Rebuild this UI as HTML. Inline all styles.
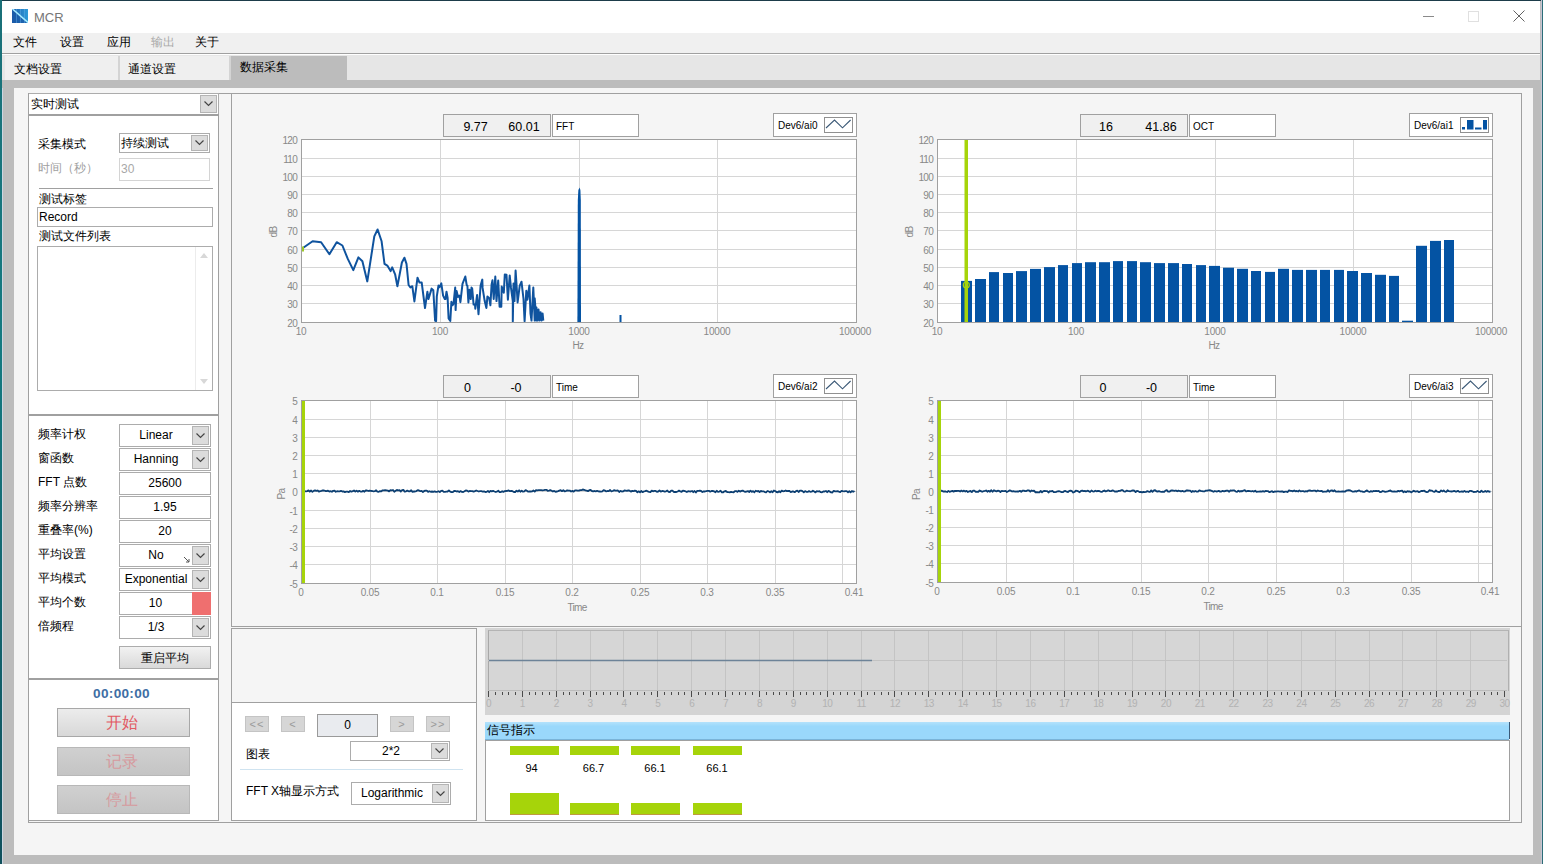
<!DOCTYPE html><html><head><meta charset="utf-8"><style>
html,body{margin:0;padding:0;}
body{width:1543px;height:864px;position:relative;overflow:hidden;background:#f5f5f5;font-family:"Liberation Sans",sans-serif;color:#000;}
div{box-sizing:content-box;}
</style></head><body>
<div style="position:absolute;left:0px;top:0px;width:1543px;height:864px;background:#bcbcbc;"></div>
<div style="position:absolute;left:0px;top:0px;width:1543px;height:1px;background:#1d3c4a;"></div>
<div style="position:absolute;left:0px;top:0px;width:2px;height:864px;background:linear-gradient(#1a7078,#157a80 40%,#10505c);"></div>
<div style="position:absolute;left:2px;top:33px;width:1px;height:831px;background:#ccd6e2;"></div>
<div style="position:absolute;left:1541px;top:0px;width:1px;height:864px;background:#c8c4d4;"></div>
<div style="position:absolute;left:1542px;top:0px;width:1px;height:864px;background:#2c6e78;"></div>
<div style="position:absolute;left:2px;top:1px;width:1538px;height:32px;background:#ffffff;"></div>
<svg style="position:absolute;left:12px;top:9px" width="16" height="14" viewBox="0 0 16 14">
<defs><linearGradient id="ig" x1="0" x2="1" y1="0" y2="0"><stop offset="0" stop-color="#1f5fae"/><stop offset="1" stop-color="#2c9ad8"/></linearGradient></defs>
<rect x="0" y="0" width="16" height="14" fill="url(#ig)"/>
<path d="M0 0 L16 14 L0 14 Z" fill="#1a58a6" opacity="0.75"/>
<rect x="4" y="0" width="0.8" height="14" fill="#6fb8ee" opacity="0.5"/><rect x="8" y="0" width="0.8" height="14" fill="#6fb8ee" opacity="0.5"/><rect x="12" y="0" width="0.8" height="14" fill="#6fb8ee" opacity="0.5"/>
<path d="M0.5 0 L16 13.6" stroke="#a6ecff" stroke-width="1.5"/></svg>
<div style="position:absolute;left:34px;top:9.5px;white-space:nowrap;font-size:13px;color:#767676;letter-spacing:0px;height:15px;line-height:15px;">MCR</div>
<div style="position:absolute;left:1423px;top:16px;width:11px;height:1px;background:#8a8a8a;"></div>
<div style="position:absolute;left:1468px;top:11px;width:9px;height:9px;border:1px solid #e0e0e0;"></div>
<svg style="position:absolute;left:1513px;top:10px" width="12" height="12" viewBox="0 0 12 12"><path d="M0.5 0.5 L11.5 11.5 M11.5 0.5 L0.5 11.5" stroke="#505050" stroke-width="0.9"/></svg>
<div style="position:absolute;left:2px;top:33px;width:1538px;height:20px;background:#f0f0f0;"></div>
<div style="position:absolute;left:2px;top:53px;width:1538px;height:1px;background:#a0a0a0;"></div>
<div style="position:absolute;left:2px;top:54px;width:1538px;height:1px;background:#ffffff;"></div>
<div style="position:absolute;left:13px;top:33px;white-space:nowrap;font-size:12px;color:#000;height:18px;line-height:18px;">文件</div>
<div style="position:absolute;left:60px;top:33px;white-space:nowrap;font-size:12px;color:#000;height:18px;line-height:18px;">设置</div>
<div style="position:absolute;left:107px;top:33px;white-space:nowrap;font-size:12px;color:#000;height:18px;line-height:18px;">应用</div>
<div style="position:absolute;left:151px;top:33px;white-space:nowrap;font-size:12px;color:#a8a8a8;height:18px;line-height:18px;">输出</div>
<div style="position:absolute;left:195px;top:33px;white-space:nowrap;font-size:12px;color:#000;height:18px;line-height:18px;">关于</div>
<div style="position:absolute;left:2px;top:55px;width:1538px;height:25px;background:#e6e6e6;"></div>
<div style="position:absolute;left:5px;top:56px;width:113px;height:24px;background:#efefef;border-right:2px solid #d4d4d4;"></div>
<div style="position:absolute;left:120px;top:56px;width:109px;height:24px;background:#efefef;border-right:2px solid #d4d4d4;"></div>
<div style="position:absolute;left:231px;top:56px;width:116px;height:24px;background:#bcbcbc;"></div>
<div style="position:absolute;left:14px;top:57px;white-space:nowrap;font-size:12px;height:25px;line-height:25px;">文档设置</div>
<div style="position:absolute;left:128px;top:57px;white-space:nowrap;font-size:12px;height:25px;line-height:25px;">通道设置</div>
<div style="position:absolute;left:240px;top:55px;white-space:nowrap;font-size:12px;height:24px;line-height:24px;">数据采集</div>
<div style="position:absolute;left:2px;top:80px;width:1538px;height:8px;background:#bcbcbc;"></div>
<div style="position:absolute;left:14px;top:88px;width:1519px;height:767px;background:#f5f5f5;"></div>
<div style="position:absolute;left:28px;top:93px;width:189px;height:726px;background:#fff;border:1px solid #a0a0a0;"></div>
<div style="position:absolute;left:28px;top:93px;width:189px;height:20px;border:1px solid #acacac;background:#fff;"></div>
<div style="position:absolute;left:31px;top:93px;white-space:nowrap;font-size:12px;color:#000;height:22px;line-height:22px;">实时测试</div>
<div style="position:absolute;left:200px;top:95px;width:15px;height:16px;border:1px solid #b4b4b4;background:#dcdcdc;"><svg width="10" height="6" style="position:absolute;left:3px;top:5px" viewBox="0 0 10 6"><path d="M0.5 0.5 L4.5 4.5 L8.5 0.5" fill="none" stroke="#444" stroke-width="1.15"/></svg></div>
<div style="position:absolute;left:28px;top:114px;width:191px;height:2px;background:#a0a0a0;"></div>
<div style="position:absolute;left:28px;top:414px;width:191px;height:2px;background:#a0a0a0;"></div>
<div style="position:absolute;left:28px;top:678px;width:191px;height:2px;background:#a0a0a0;"></div>
<div style="position:absolute;left:28px;top:93px;width:1px;height:730px;background:#a0a0a0;"></div>
<div style="position:absolute;left:28px;top:822px;width:1494px;height:1px;background:#a0a0a0;"></div>
<div style="position:absolute;left:38px;top:134px;white-space:nowrap;font-size:12px;height:20px;line-height:20px;">采集模式</div>
<div style="position:absolute;left:119px;top:133px;width:89px;height:18px;border:1px solid #acacac;background:#fff;"></div>
<div style="position:absolute;left:121px;top:133px;white-space:nowrap;font-size:12px;color:#000;height:20px;line-height:20px;">持续测试</div>
<div style="position:absolute;left:191px;top:135px;width:15px;height:14px;border:1px solid #b4b4b4;background:#dcdcdc;"><svg width="10" height="6" style="position:absolute;left:3px;top:4px" viewBox="0 0 10 6"><path d="M0.5 0.5 L4.5 4.5 L8.5 0.5" fill="none" stroke="#444" stroke-width="1.15"/></svg></div>
<div style="position:absolute;left:38px;top:158px;white-space:nowrap;font-size:12px;color:#a0a0a0;height:20px;line-height:20px;">时间（秒）</div>
<div style="position:absolute;left:119px;top:158px;width:89px;height:21px;border:1px solid #d4d4d4;background:#fff;"></div>
<div style="position:absolute;left:121px;top:158px;white-space:nowrap;font-size:12px;color:#a8a8a8;height:23px;line-height:23px;">30</div>
<div style="position:absolute;left:39px;top:188px;width:174px;height:1px;background:#a0a0a0;"></div>
<div style="position:absolute;left:39px;top:190px;white-space:nowrap;font-size:12px;height:18px;line-height:18px;">测试标签</div>
<div style="position:absolute;left:37px;top:207px;width:174px;height:18px;border:1px solid #acacac;background:#fff;"></div>
<div style="position:absolute;left:41px;top:207px;white-space:nowrap;font-size:12px;color:#000;height:20px;line-height:20px;"></div>
<div style="position:absolute;left:39px;top:207px;white-space:nowrap;font-size:12px;height:20px;line-height:20px;">Record</div>
<div style="position:absolute;left:39px;top:227px;white-space:nowrap;font-size:12px;height:18px;line-height:18px;">测试文件列表</div>
<div style="position:absolute;left:37px;top:246px;width:174px;height:143px;background:#fff;border:1px solid #acacac;"></div>
<div style="position:absolute;left:195px;top:247px;width:1px;height:143px;background:#ececec;"></div>
<svg style="position:absolute;left:196px;top:250px" width="16" height="10"><path d="M4 8 L8 3 L12 8 Z" fill="#d8d8d8"/></svg>
<svg style="position:absolute;left:196px;top:377px" width="16" height="10"><path d="M4 2 L8 7 L12 2 Z" fill="#d8d8d8"/></svg>
<div style="position:absolute;left:38px;top:423px;white-space:nowrap;font-size:12px;height:22px;line-height:22px;">频率计权</div>
<div style="position:absolute;left:38px;top:447px;white-space:nowrap;font-size:12px;height:22px;line-height:22px;">窗函数</div>
<div style="position:absolute;left:38px;top:471px;white-space:nowrap;font-size:12px;height:22px;line-height:22px;">FFT 点数</div>
<div style="position:absolute;left:38px;top:495px;white-space:nowrap;font-size:12px;height:22px;line-height:22px;">频率分辨率</div>
<div style="position:absolute;left:38px;top:519px;white-space:nowrap;font-size:12px;height:22px;line-height:22px;">重叠率(%)</div>
<div style="position:absolute;left:38px;top:543px;white-space:nowrap;font-size:12px;height:22px;line-height:22px;">平均设置</div>
<div style="position:absolute;left:38px;top:567px;white-space:nowrap;font-size:12px;height:22px;line-height:22px;">平均模式</div>
<div style="position:absolute;left:38px;top:591px;white-space:nowrap;font-size:12px;height:22px;line-height:22px;">平均个数</div>
<div style="position:absolute;left:38px;top:615px;white-space:nowrap;font-size:12px;height:22px;line-height:22px;">倍频程</div>
<div style="position:absolute;left:119px;top:424px;width:90px;height:21px;border:1px solid #acacac;background:#fff;"></div>
<div style="position:absolute;left:120px;top:424px;white-space:nowrap;font-size:12px;color:#000;width:72px;height:23px;line-height:23px;text-align:center;">Linear</div>
<div style="position:absolute;left:192px;top:426px;width:15px;height:17px;border:1px solid #b4b4b4;background:#dcdcdc;"><svg width="10" height="6" style="position:absolute;left:3px;top:6px" viewBox="0 0 10 6"><path d="M0.5 0.5 L4.5 4.5 L8.5 0.5" fill="none" stroke="#444" stroke-width="1.15"/></svg></div>
<div style="position:absolute;left:119px;top:448px;width:90px;height:21px;border:1px solid #acacac;background:#fff;"></div>
<div style="position:absolute;left:120px;top:448px;white-space:nowrap;font-size:12px;color:#000;width:72px;height:23px;line-height:23px;text-align:center;">Hanning</div>
<div style="position:absolute;left:192px;top:450px;width:15px;height:17px;border:1px solid #b4b4b4;background:#dcdcdc;"><svg width="10" height="6" style="position:absolute;left:3px;top:6px" viewBox="0 0 10 6"><path d="M0.5 0.5 L4.5 4.5 L8.5 0.5" fill="none" stroke="#444" stroke-width="1.15"/></svg></div>
<div style="position:absolute;left:119px;top:472px;width:90px;height:21px;border:1px solid #acacac;background:#fff;"></div>
<div style="position:absolute;left:119px;top:472px;white-space:nowrap;font-size:12px;color:#000;width:92px;height:23px;line-height:23px;text-align:center;">25600</div>
<div style="position:absolute;left:119px;top:496px;width:90px;height:21px;border:1px solid #acacac;background:#fff;"></div>
<div style="position:absolute;left:119px;top:496px;white-space:nowrap;font-size:12px;color:#000;width:92px;height:23px;line-height:23px;text-align:center;">1.95</div>
<div style="position:absolute;left:119px;top:520px;width:90px;height:21px;border:1px solid #acacac;background:#fff;"></div>
<div style="position:absolute;left:119px;top:520px;white-space:nowrap;font-size:12px;color:#000;width:92px;height:23px;line-height:23px;text-align:center;">20</div>
<div style="position:absolute;left:119px;top:544px;width:90px;height:21px;border:1px solid #acacac;background:#fff;"></div>
<div style="position:absolute;left:120px;top:544px;white-space:nowrap;font-size:12px;color:#000;width:72px;height:23px;line-height:23px;text-align:center;">No</div>
<div style="position:absolute;left:192px;top:546px;width:15px;height:17px;border:1px solid #b4b4b4;background:#dcdcdc;"><svg width="10" height="6" style="position:absolute;left:3px;top:6px" viewBox="0 0 10 6"><path d="M0.5 0.5 L4.5 4.5 L8.5 0.5" fill="none" stroke="#444" stroke-width="1.15"/></svg></div>
<svg style="position:absolute;left:183px;top:556px" width="8" height="8"><path d="M1 1 L6 6 M6 3 L6 6 L3 6" stroke="#555" stroke-width="1" fill="none"/></svg>
<div style="position:absolute;left:119px;top:568px;width:90px;height:21px;border:1px solid #acacac;background:#fff;"></div>
<div style="position:absolute;left:120px;top:568px;white-space:nowrap;font-size:12px;color:#000;width:72px;height:23px;line-height:23px;text-align:center;">Exponential</div>
<div style="position:absolute;left:192px;top:570px;width:15px;height:17px;border:1px solid #b4b4b4;background:#dcdcdc;"><svg width="10" height="6" style="position:absolute;left:3px;top:6px" viewBox="0 0 10 6"><path d="M0.5 0.5 L4.5 4.5 L8.5 0.5" fill="none" stroke="#444" stroke-width="1.15"/></svg></div>
<div style="position:absolute;left:119px;top:592px;width:90px;height:21px;border:1px solid #acacac;background:#fff;"></div>
<div style="position:absolute;left:119px;top:592px;white-space:nowrap;font-size:12px;color:#000;width:92px;height:23px;line-height:23px;text-align:center;"></div>
<div style="position:absolute;left:119px;top:592px;white-space:nowrap;font-size:12px;width:73px;height:23px;line-height:23px;text-align:center;">10</div>
<div style="position:absolute;left:192px;top:592px;width:19px;height:23px;background:#ef6f6f;"></div>
<div style="position:absolute;left:119px;top:592px;white-space:nowrap;"></div>
<div style="position:absolute;left:119px;top:616px;width:90px;height:21px;border:1px solid #acacac;background:#fff;"></div>
<div style="position:absolute;left:120px;top:616px;white-space:nowrap;font-size:12px;color:#000;width:72px;height:23px;line-height:23px;text-align:center;">1/3</div>
<div style="position:absolute;left:192px;top:618px;width:15px;height:17px;border:1px solid #b4b4b4;background:#dcdcdc;"><svg width="10" height="6" style="position:absolute;left:3px;top:6px" viewBox="0 0 10 6"><path d="M0.5 0.5 L4.5 4.5 L8.5 0.5" fill="none" stroke="#444" stroke-width="1.15"/></svg></div>
<div style="position:absolute;left:119px;top:646px;width:90px;height:21px;border:1px solid #acacac;background:linear-gradient(#f2f2f2,#d9d9d9);font-size:12px;line-height:23px;text-align:center;">重启平均</div>
<div style="position:absolute;left:28px;top:685px;white-space:nowrap;font-size:13.6px;font-weight:bold;color:#3e6ea4;letter-spacing:0.3px;width:187px;height:18px;line-height:18px;text-align:center;">00:00:00</div>
<div style="position:absolute;left:57px;top:708px;width:131px;height:27px;border:1px solid #a8a8a8;background:linear-gradient(#ececec,#d8d8d8);font-size:16px;line-height:28px;text-align:center;color:#e25a64;text-indent:-4px;">开始</div>
<div style="position:absolute;left:57px;top:747px;width:131px;height:27px;border:1px solid #b8b8b8;background:linear-gradient(#d0d0d0,#c4c4c4);font-size:16px;line-height:28px;text-align:center;color:#d69a9e;text-indent:-4px;">记录</div>
<div style="position:absolute;left:57px;top:785px;width:131px;height:27px;border:1px solid #b8b8b8;background:linear-gradient(#d0d0d0,#c4c4c4);font-size:16px;line-height:28px;text-align:center;color:#d69a9e;text-indent:-4px;">停止</div>
<div style="position:absolute;left:219px;top:93px;width:1302px;height:1px;background:#a0a0a0;"></div>
<div style="position:absolute;left:231px;top:93px;width:1289px;height:532px;border:1px solid #a0a0a0;background:#f5f5f5;"></div>
<div style="position:absolute;left:1521px;top:93px;width:1px;height:730px;background:#a0a0a0;"></div>
<svg style="position:absolute;left:0;top:0" width="1543" height="864" viewBox="0 0 1543 864"><rect x="301.5" y="139.5" width="555" height="183" fill="#fff"/><line x1="440.5" y1="139" x2="440.5" y2="322" stroke="#d6d6d6" stroke-width="1"/><line x1="579.5" y1="139" x2="579.5" y2="322" stroke="#d6d6d6" stroke-width="1"/><line x1="717.5" y1="139" x2="717.5" y2="322" stroke="#d6d6d6" stroke-width="1"/><line x1="301" y1="158.5" x2="856" y2="158.5" stroke="#d6d6d6" stroke-width="1"/><line x1="301" y1="176.5" x2="856" y2="176.5" stroke="#d6d6d6" stroke-width="1"/><line x1="301" y1="194.5" x2="856" y2="194.5" stroke="#d6d6d6" stroke-width="1"/><line x1="301" y1="212.5" x2="856" y2="212.5" stroke="#d6d6d6" stroke-width="1"/><line x1="301" y1="230.5" x2="856" y2="230.5" stroke="#d6d6d6" stroke-width="1"/><line x1="301" y1="249.5" x2="856" y2="249.5" stroke="#d6d6d6" stroke-width="1"/><line x1="301" y1="267.5" x2="856" y2="267.5" stroke="#d6d6d6" stroke-width="1"/><line x1="301" y1="285.5" x2="856" y2="285.5" stroke="#d6d6d6" stroke-width="1"/><line x1="301" y1="303.5" x2="856" y2="303.5" stroke="#d6d6d6" stroke-width="1"/><polyline fill="none" stroke="#0f539e" stroke-width="2" stroke-linejoin="round" points="301.5,249.0 312.6,241.3 321.1,242.2 329.4,254.3 336.7,242.2 342.4,245.5 347.8,258.9 353.3,270.1 358.4,257.4 362.4,261.3 367.3,281.4 374.3,236.4 377.6,229.5 381.6,241.3 384.5,263.8 387.3,265.6 390.6,271.1 392.2,267.4 395.2,274.7 397.4,286.2 401.9,262.5 404.4,257.7 406.5,263.8 408.6,285.0 410.4,287.5 412.3,286.2 414.4,301.4 417.5,277.7 419.5,282.6 421.7,282.6 425.0,308.0 427.4,291.7 428.5,299.0 431.6,288.6 433.3,290.3 435.1,320.6 436.1,321.3 436.8,296.3 438.5,285.5 439.6,287.2 441.3,283.4 443.1,295.6 444.8,299.0 445.5,299.0 446.5,291.7 447.6,297.6 448.6,318.5 450.3,320.9 451.4,301.8 452.4,305.3 453.5,303.9 455.2,287.6 455.6,310.1 456.6,291.0 458.0,296.9 459.4,295.6 460.4,302.2 462.5,283.8 465.3,276.5 466.7,285.1 467.4,285.8 468.4,302.5 469.4,289.7 470.8,299.0 471.5,287.6 472.2,288.6 473.6,304.6 475.0,304.6 475.3,308.8 477.1,294.9 478.5,314.3 480.6,285.5 482.3,279.6 482.6,287.9 484.7,301.1 486.4,308.0 487.4,296.6 489.2,298.3 490.4,305.3 491.6,284.4 492.5,280.3 493.7,299.0 495.3,276.5 496.5,301.1 498.2,280.6 499.6,306.7 501.3,306.7 501.7,286.5 503.8,292.8 504.8,274.4 506.5,274.7 507.9,299.7 509.7,275.4 511.0,287.9 512.8,301.1 512.8,321.6 513.5,283.4 514.5,301.1 515.6,270.6 516.6,285.8 517.6,302.5 519.7,285.8 521.5,281.7 523.5,299.0 524.6,321.3 526.3,290.7 527.4,299.7 529.4,285.5 530.5,313.6 531.5,320.6 533.3,287.6 534.7,320.6 534.7,298.3 536.4,320.6 536.4,307.4 537.4,320.6 538.5,309.4 539.5,320.6 540.6,312.2 541.6,320.6 542.6,313.6 543.3,320.6"/><path d="M577.4 322 L577.8 200 L578.4 190 L579.6 187.5 L580.4 190 L580.8 200 L581 322 Z" fill="#0453a3"/><rect x="619.5" y="315" width="2" height="7" fill="#0453a3"/><rect x="301.5" y="246.5" width="2.5" height="5" fill="#9cc828"/><rect x="301.5" y="139.5" width="555" height="183" fill="none" stroke="#a0a0a0" stroke-width="1"/><text x="297" y="143.8" text-anchor="end" style="font-family:Liberation Sans,sans-serif;font-size:10px;fill:#888888;letter-spacing:-0.7px;">120</text><text x="297" y="162.8" text-anchor="end" style="font-family:Liberation Sans,sans-serif;font-size:10px;fill:#888888;letter-spacing:-0.7px;">110</text><text x="297" y="180.8" text-anchor="end" style="font-family:Liberation Sans,sans-serif;font-size:10px;fill:#888888;letter-spacing:-0.7px;">100</text><text x="297" y="198.8" text-anchor="end" style="font-family:Liberation Sans,sans-serif;font-size:10px;fill:#888888;letter-spacing:-0.7px;">90</text><text x="297" y="216.8" text-anchor="end" style="font-family:Liberation Sans,sans-serif;font-size:10px;fill:#888888;letter-spacing:-0.7px;">80</text><text x="297" y="234.8" text-anchor="end" style="font-family:Liberation Sans,sans-serif;font-size:10px;fill:#888888;letter-spacing:-0.7px;">70</text><text x="297" y="253.8" text-anchor="end" style="font-family:Liberation Sans,sans-serif;font-size:10px;fill:#888888;letter-spacing:-0.7px;">60</text><text x="297" y="271.8" text-anchor="end" style="font-family:Liberation Sans,sans-serif;font-size:10px;fill:#888888;letter-spacing:-0.7px;">50</text><text x="297" y="289.8" text-anchor="end" style="font-family:Liberation Sans,sans-serif;font-size:10px;fill:#888888;letter-spacing:-0.7px;">40</text><text x="297" y="307.8" text-anchor="end" style="font-family:Liberation Sans,sans-serif;font-size:10px;fill:#888888;letter-spacing:-0.7px;">30</text><text x="297" y="326.8" text-anchor="end" style="font-family:Liberation Sans,sans-serif;font-size:10px;fill:#888888;letter-spacing:-0.7px;">20</text><text x="301" y="335" text-anchor="middle" style="font-family:Liberation Sans,sans-serif;font-size:10px;fill:#888888;letter-spacing:-0.7px;letter-spacing:-0.2px;">10</text><text x="440" y="335" text-anchor="middle" style="font-family:Liberation Sans,sans-serif;font-size:10px;fill:#888888;letter-spacing:-0.7px;letter-spacing:-0.2px;">100</text><text x="579" y="335" text-anchor="middle" style="font-family:Liberation Sans,sans-serif;font-size:10px;fill:#888888;letter-spacing:-0.7px;letter-spacing:-0.2px;">1000</text><text x="717" y="335" text-anchor="middle" style="font-family:Liberation Sans,sans-serif;font-size:10px;fill:#888888;letter-spacing:-0.7px;letter-spacing:-0.2px;">10000</text><text x="855" y="335" text-anchor="middle" style="font-family:Liberation Sans,sans-serif;font-size:10px;fill:#888888;letter-spacing:-0.7px;letter-spacing:-0.2px;">100000</text><text x="0" y="0" transform="translate(277,232) rotate(-90)" text-anchor="middle" style="font-family:Liberation Sans,sans-serif;font-size:10px;fill:#888888;letter-spacing:-0.7px;">dB</text><text x="578" y="349" text-anchor="middle" style="font-family:Liberation Sans,sans-serif;font-size:10px;fill:#888888;letter-spacing:-0.7px;">Hz</text><rect x="937.5" y="139.5" width="555" height="183" fill="#fff"/><line x1="1076.5" y1="139" x2="1076.5" y2="322" stroke="#d6d6d6" stroke-width="1"/><line x1="1215.5" y1="139" x2="1215.5" y2="322" stroke="#d6d6d6" stroke-width="1"/><line x1="1353.5" y1="139" x2="1353.5" y2="322" stroke="#d6d6d6" stroke-width="1"/><line x1="937" y1="158.5" x2="1492" y2="158.5" stroke="#d6d6d6" stroke-width="1"/><line x1="937" y1="176.5" x2="1492" y2="176.5" stroke="#d6d6d6" stroke-width="1"/><line x1="937" y1="194.5" x2="1492" y2="194.5" stroke="#d6d6d6" stroke-width="1"/><line x1="937" y1="212.5" x2="1492" y2="212.5" stroke="#d6d6d6" stroke-width="1"/><line x1="937" y1="230.5" x2="1492" y2="230.5" stroke="#d6d6d6" stroke-width="1"/><line x1="937" y1="249.5" x2="1492" y2="249.5" stroke="#d6d6d6" stroke-width="1"/><line x1="937" y1="267.5" x2="1492" y2="267.5" stroke="#d6d6d6" stroke-width="1"/><line x1="937" y1="285.5" x2="1492" y2="285.5" stroke="#d6d6d6" stroke-width="1"/><line x1="937" y1="303.5" x2="1492" y2="303.5" stroke="#d6d6d6" stroke-width="1"/><rect x="961" y="280.9" width="11" height="41.1" fill="#0453a3"/><rect x="975" y="279.0" width="11" height="43.0" fill="#0453a3"/><rect x="989" y="272.1" width="10" height="49.9" fill="#0453a3"/><rect x="1003" y="273.0" width="10" height="49.0" fill="#0453a3"/><rect x="1016" y="271.1" width="11" height="50.9" fill="#0453a3"/><rect x="1030" y="268.9" width="11" height="53.1" fill="#0453a3"/><rect x="1044" y="267.1" width="11" height="54.9" fill="#0453a3"/><rect x="1058" y="265.1" width="10" height="56.9" fill="#0453a3"/><rect x="1072" y="263.1" width="10" height="58.9" fill="#0453a3"/><rect x="1085" y="262.2" width="11" height="59.8" fill="#0453a3"/><rect x="1099" y="262.2" width="11" height="59.8" fill="#0453a3"/><rect x="1113" y="261.1" width="10" height="60.9" fill="#0453a3"/><rect x="1127" y="261.1" width="10" height="60.9" fill="#0453a3"/><rect x="1140" y="262.2" width="11" height="59.8" fill="#0453a3"/><rect x="1154" y="263.1" width="11" height="58.9" fill="#0453a3"/><rect x="1168" y="263.1" width="11" height="58.9" fill="#0453a3"/><rect x="1182" y="264.0" width="10" height="58.0" fill="#0453a3"/><rect x="1196" y="265.1" width="10" height="56.9" fill="#0453a3"/><rect x="1209" y="265.9" width="11" height="56.1" fill="#0453a3"/><rect x="1223" y="267.7" width="11" height="54.3" fill="#0453a3"/><rect x="1237" y="268.8" width="11" height="53.2" fill="#0453a3"/><rect x="1251" y="271.0" width="10" height="51.0" fill="#0453a3"/><rect x="1265" y="271.9" width="10" height="50.1" fill="#0453a3"/><rect x="1278" y="268.8" width="11" height="53.2" fill="#0453a3"/><rect x="1292" y="269.9" width="11" height="52.1" fill="#0453a3"/><rect x="1306" y="269.9" width="11" height="52.1" fill="#0453a3"/><rect x="1320" y="269.9" width="10" height="52.1" fill="#0453a3"/><rect x="1334" y="269.9" width="10" height="52.1" fill="#0453a3"/><rect x="1347" y="271.0" width="11" height="51.0" fill="#0453a3"/><rect x="1361" y="273.0" width="11" height="49.0" fill="#0453a3"/><rect x="1375" y="274.8" width="11" height="47.2" fill="#0453a3"/><rect x="1389" y="275.9" width="10" height="46.1" fill="#0453a3"/><rect x="1402" y="320.7" width="11" height="1.3" fill="#0453a3"/><rect x="1416" y="245.8" width="11" height="76.2" fill="#0453a3"/><rect x="1430" y="240.9" width="11" height="81.1" fill="#0453a3"/><rect x="1444" y="240.0" width="10" height="82.0" fill="#0453a3"/><rect x="964.5" y="139" width="3.5" height="183" fill="#a6d40a"/><circle cx="966.3" cy="285" r="3" fill="none" stroke="#a6d40a" stroke-width="1.2"/><rect x="937.5" y="139.5" width="555" height="183" fill="none" stroke="#a0a0a0" stroke-width="1"/><text x="933" y="143.8" text-anchor="end" style="font-family:Liberation Sans,sans-serif;font-size:10px;fill:#888888;letter-spacing:-0.7px;">120</text><text x="933" y="162.8" text-anchor="end" style="font-family:Liberation Sans,sans-serif;font-size:10px;fill:#888888;letter-spacing:-0.7px;">110</text><text x="933" y="180.8" text-anchor="end" style="font-family:Liberation Sans,sans-serif;font-size:10px;fill:#888888;letter-spacing:-0.7px;">100</text><text x="933" y="198.8" text-anchor="end" style="font-family:Liberation Sans,sans-serif;font-size:10px;fill:#888888;letter-spacing:-0.7px;">90</text><text x="933" y="216.8" text-anchor="end" style="font-family:Liberation Sans,sans-serif;font-size:10px;fill:#888888;letter-spacing:-0.7px;">80</text><text x="933" y="234.8" text-anchor="end" style="font-family:Liberation Sans,sans-serif;font-size:10px;fill:#888888;letter-spacing:-0.7px;">70</text><text x="933" y="253.8" text-anchor="end" style="font-family:Liberation Sans,sans-serif;font-size:10px;fill:#888888;letter-spacing:-0.7px;">60</text><text x="933" y="271.8" text-anchor="end" style="font-family:Liberation Sans,sans-serif;font-size:10px;fill:#888888;letter-spacing:-0.7px;">50</text><text x="933" y="289.8" text-anchor="end" style="font-family:Liberation Sans,sans-serif;font-size:10px;fill:#888888;letter-spacing:-0.7px;">40</text><text x="933" y="307.8" text-anchor="end" style="font-family:Liberation Sans,sans-serif;font-size:10px;fill:#888888;letter-spacing:-0.7px;">30</text><text x="933" y="326.8" text-anchor="end" style="font-family:Liberation Sans,sans-serif;font-size:10px;fill:#888888;letter-spacing:-0.7px;">20</text><text x="937" y="335" text-anchor="middle" style="font-family:Liberation Sans,sans-serif;font-size:10px;fill:#888888;letter-spacing:-0.7px;letter-spacing:-0.2px;">10</text><text x="1076" y="335" text-anchor="middle" style="font-family:Liberation Sans,sans-serif;font-size:10px;fill:#888888;letter-spacing:-0.7px;letter-spacing:-0.2px;">100</text><text x="1215" y="335" text-anchor="middle" style="font-family:Liberation Sans,sans-serif;font-size:10px;fill:#888888;letter-spacing:-0.7px;letter-spacing:-0.2px;">1000</text><text x="1353" y="335" text-anchor="middle" style="font-family:Liberation Sans,sans-serif;font-size:10px;fill:#888888;letter-spacing:-0.7px;letter-spacing:-0.2px;">10000</text><text x="1491" y="335" text-anchor="middle" style="font-family:Liberation Sans,sans-serif;font-size:10px;fill:#888888;letter-spacing:-0.7px;letter-spacing:-0.2px;">100000</text><text x="0" y="0" transform="translate(913,232) rotate(-90)" text-anchor="middle" style="font-family:Liberation Sans,sans-serif;font-size:10px;fill:#888888;letter-spacing:-0.7px;">dB</text><text x="1214" y="349" text-anchor="middle" style="font-family:Liberation Sans,sans-serif;font-size:10px;fill:#888888;letter-spacing:-0.7px;">Hz</text><rect x="301.5" y="400.5" width="555" height="183" fill="#fff"/><line x1="370.5" y1="400" x2="370.5" y2="583" stroke="#d6d6d6" stroke-width="1"/><line x1="437.5" y1="400" x2="437.5" y2="583" stroke="#d6d6d6" stroke-width="1"/><line x1="505.5" y1="400" x2="505.5" y2="583" stroke="#d6d6d6" stroke-width="1"/><line x1="572.5" y1="400" x2="572.5" y2="583" stroke="#d6d6d6" stroke-width="1"/><line x1="640.5" y1="400" x2="640.5" y2="583" stroke="#d6d6d6" stroke-width="1"/><line x1="707.5" y1="400" x2="707.5" y2="583" stroke="#d6d6d6" stroke-width="1"/><line x1="775.5" y1="400" x2="775.5" y2="583" stroke="#d6d6d6" stroke-width="1"/><line x1="842.5" y1="400" x2="842.5" y2="583" stroke="#d6d6d6" stroke-width="1"/><line x1="301" y1="419.5" x2="856" y2="419.5" stroke="#d6d6d6" stroke-width="1"/><line x1="301" y1="437.5" x2="856" y2="437.5" stroke="#d6d6d6" stroke-width="1"/><line x1="301" y1="455.5" x2="856" y2="455.5" stroke="#d6d6d6" stroke-width="1"/><line x1="301" y1="473.5" x2="856" y2="473.5" stroke="#d6d6d6" stroke-width="1"/><line x1="301" y1="491.5" x2="856" y2="491.5" stroke="#d6d6d6" stroke-width="1"/><line x1="301" y1="510.5" x2="856" y2="510.5" stroke="#d6d6d6" stroke-width="1"/><line x1="301" y1="528.5" x2="856" y2="528.5" stroke="#d6d6d6" stroke-width="1"/><line x1="301" y1="546.5" x2="856" y2="546.5" stroke="#d6d6d6" stroke-width="1"/><line x1="301" y1="564.5" x2="856" y2="564.5" stroke="#d6d6d6" stroke-width="1"/><polyline fill="none" stroke="#0c3f72" stroke-width="1.8" stroke-linejoin="round" points="302.0,490.7 303.3,490.6 304.6,491.2 305.9,491.3 307.2,491.1 308.5,490.4 309.8,491.7 311.1,490.5 312.4,491.9 313.7,490.9 315.0,490.4 316.3,490.9 317.6,490.5 318.9,491.7 320.2,491.2 321.5,490.9 322.8,490.4 324.1,490.5 325.4,491.0 326.7,491.2 328.0,490.7 329.3,491.5 330.6,491.2 331.9,491.8 333.2,490.8 334.5,490.6 335.8,491.8 337.1,491.2 338.4,491.4 339.7,491.3 341.0,490.9 342.3,491.5 343.6,491.3 344.9,492.2 346.2,491.7 347.5,491.7 348.8,492.2 350.1,491.0 351.4,491.7 352.7,491.2 354.0,490.5 355.3,491.6 356.6,490.6 357.9,491.7 359.2,490.8 360.5,491.6 361.8,491.7 363.1,490.8 364.4,491.7 365.7,490.5 367.0,490.5 368.3,491.0 369.6,490.6 370.9,490.8 372.2,491.0 373.5,491.4 374.8,491.2 376.1,490.3 377.4,491.7 378.7,491.8 380.0,491.1 381.3,491.4 382.6,490.3 383.9,490.4 385.2,490.2 386.5,490.3 387.8,490.6 389.1,491.4 390.4,490.1 391.7,490.4 393.0,490.0 394.3,491.7 395.6,490.8 396.9,490.0 398.2,490.3 399.5,490.2 400.8,491.5 402.1,490.1 403.4,489.9 404.7,491.7 406.0,491.3 407.3,490.6 408.6,491.3 409.9,491.3 411.2,490.3 412.5,491.8 413.8,491.5 415.1,491.5 416.4,491.1 417.7,490.2 419.0,490.5 420.3,491.2 421.6,490.9 422.9,492.0 424.2,491.0 425.5,490.7 426.8,490.6 428.1,491.9 429.4,491.2 430.7,491.8 432.0,491.5 433.3,491.8 434.6,491.3 435.9,491.8 437.2,491.8 438.5,491.2 439.8,492.1 441.1,490.8 442.4,490.7 443.7,491.9 445.0,491.9 446.3,491.7 447.6,491.5 448.9,490.4 450.2,491.7 451.5,492.2 452.8,492.1 454.1,491.0 455.4,491.0 456.7,491.5 458.0,491.2 459.3,492.0 460.6,491.1 461.9,491.9 463.2,492.0 464.5,491.3 465.8,490.4 467.1,490.6 468.4,491.6 469.7,491.0 471.0,491.2 472.3,491.1 473.6,491.6 474.9,491.1 476.2,490.5 477.5,491.0 478.8,491.5 480.1,491.1 481.4,491.2 482.7,491.6 484.0,491.3 485.3,492.0 486.6,491.9 487.9,490.9 489.2,492.2 490.5,490.8 491.8,491.3 493.1,490.8 494.4,491.5 495.7,492.0 497.0,491.6 498.3,490.6 499.6,492.2 500.9,492.1 502.2,491.2 503.5,491.9 504.8,491.1 506.1,491.0 507.4,490.9 508.7,490.4 510.0,491.2 511.3,490.9 512.6,491.2 513.9,492.0 515.2,492.0 516.5,490.7 517.8,491.5 519.1,490.3 520.4,491.7 521.7,490.6 523.0,491.7 524.3,491.4 525.6,490.1 526.9,490.8 528.2,491.7 529.5,491.5 530.8,491.5 532.1,491.4 533.4,490.5 534.7,491.6 536.0,490.1 537.3,490.3 538.6,490.1 539.9,490.1 541.2,490.2 542.5,490.3 543.8,490.1 545.1,489.8 546.4,489.8 547.7,490.8 549.0,490.6 550.3,490.1 551.6,490.8 552.9,491.5 554.2,490.9 555.5,491.8 556.8,491.5 558.1,491.2 559.4,490.7 560.7,490.2 562.0,491.2 563.3,490.2 564.6,491.3 565.9,491.1 567.2,490.3 568.5,490.7 569.8,490.6 571.1,491.5 572.4,490.9 573.7,491.6 575.0,490.4 576.3,490.4 577.6,490.6 578.9,490.6 580.2,490.1 581.5,490.2 582.8,489.5 584.1,489.8 585.4,490.4 586.7,490.7 588.0,491.2 589.3,490.2 590.6,490.0 591.9,491.0 593.2,491.3 594.5,491.0 595.8,491.4 597.1,490.8 598.4,491.4 599.7,491.5 601.0,491.6 602.3,491.3 603.6,490.1 604.9,490.6 606.2,491.4 607.5,491.0 608.8,491.2 610.1,490.0 611.4,491.4 612.7,491.0 614.0,490.2 615.3,490.7 616.6,490.6 617.9,490.5 619.2,492.0 620.5,490.9 621.8,491.5 623.1,491.4 624.4,490.5 625.7,490.7 627.0,490.9 628.3,490.4 629.6,490.7 630.9,491.6 632.2,490.9 633.5,491.2 634.8,490.6 636.1,490.8 637.4,492.3 638.7,491.3 640.0,492.3 641.3,491.0 642.6,492.2 643.9,491.4 645.2,491.2 646.5,490.7 647.8,491.4 649.1,491.9 650.4,492.1 651.7,490.6 653.0,491.3 654.3,490.9 655.6,490.9 656.9,491.8 658.2,491.5 659.5,490.5 660.8,491.6 662.1,491.0 663.4,491.1 664.7,491.6 666.0,491.3 667.3,490.5 668.6,491.9 669.9,492.0 671.2,490.7 672.5,490.6 673.8,492.0 675.1,491.8 676.4,492.0 677.7,491.5 679.0,490.6 680.3,491.4 681.6,491.8 682.9,490.7 684.2,490.9 685.5,491.3 686.8,492.0 688.1,491.2 689.4,491.3 690.7,491.5 692.0,491.0 693.3,492.2 694.6,491.0 695.9,492.5 697.2,490.9 698.5,490.8 699.8,490.7 701.1,491.0 702.4,492.1 703.7,491.3 705.0,491.5 706.3,491.1 707.6,490.9 708.9,490.8 710.2,491.7 711.5,491.0 712.8,491.0 714.1,491.3 715.4,492.2 716.7,490.8 718.0,491.9 719.3,491.6 720.6,490.7 721.9,492.4 723.2,492.3 724.5,491.3 725.8,491.0 727.1,492.0 728.4,492.2 729.7,492.3 731.0,491.8 732.3,492.1 733.6,492.3 734.9,491.2 736.2,491.1 737.5,491.9 738.8,490.7 740.1,491.6 741.4,490.9 742.7,490.6 744.0,491.3 745.3,491.8 746.6,491.5 747.9,491.1 749.2,492.0 750.5,490.7 751.8,491.9 753.1,491.1 754.4,492.3 755.7,490.7 757.0,491.3 758.3,491.0 759.6,492.0 760.9,491.0 762.2,491.3 763.5,491.3 764.8,492.1 766.1,492.4 767.4,491.0 768.7,491.4 770.0,492.4 771.3,491.3 772.6,492.3 773.9,490.5 775.2,491.0 776.5,492.0 777.8,492.3 779.1,491.2 780.4,492.2 781.7,490.6 783.0,491.3 784.3,491.2 785.6,490.5 786.9,491.1 788.2,490.8 789.5,491.0 790.8,492.1 792.1,491.5 793.4,491.4 794.7,492.2 796.0,491.1 797.3,490.6 798.6,492.0 799.9,490.7 801.2,490.6 802.5,491.1 803.8,492.3 805.1,491.1 806.4,491.8 807.7,491.9 809.0,491.1 810.3,491.8 811.6,491.7 812.9,490.7 814.2,491.5 815.5,492.4 816.8,491.1 818.1,491.5 819.4,491.1 820.7,492.2 822.0,492.3 823.3,491.5 824.6,491.5 825.9,491.0 827.2,492.2 828.5,490.9 829.8,491.6 831.1,492.4 832.4,492.5 833.7,490.8 835.0,491.4 836.3,491.4 837.6,491.2 838.9,491.7 840.2,492.1 841.5,490.8 842.8,491.2 844.1,491.4 845.4,491.1 846.7,491.1 848.0,492.2 849.3,491.2 850.6,492.4 851.9,491.0 853.2,491.8 854.5,491.0"/><rect x="301.5" y="400" width="3.5" height="183" fill="#a6d40a"/><rect x="301.5" y="400.5" width="555" height="183" fill="none" stroke="#a0a0a0" stroke-width="1"/><text x="297" y="404.8" text-anchor="end" style="font-family:Liberation Sans,sans-serif;font-size:10px;fill:#888888;letter-spacing:-0.7px;">5</text><text x="297" y="423.8" text-anchor="end" style="font-family:Liberation Sans,sans-serif;font-size:10px;fill:#888888;letter-spacing:-0.7px;">4</text><text x="297" y="441.8" text-anchor="end" style="font-family:Liberation Sans,sans-serif;font-size:10px;fill:#888888;letter-spacing:-0.7px;">3</text><text x="297" y="459.8" text-anchor="end" style="font-family:Liberation Sans,sans-serif;font-size:10px;fill:#888888;letter-spacing:-0.7px;">2</text><text x="297" y="477.8" text-anchor="end" style="font-family:Liberation Sans,sans-serif;font-size:10px;fill:#888888;letter-spacing:-0.7px;">1</text><text x="297" y="495.8" text-anchor="end" style="font-family:Liberation Sans,sans-serif;font-size:10px;fill:#888888;letter-spacing:-0.7px;">0</text><text x="297" y="514.8" text-anchor="end" style="font-family:Liberation Sans,sans-serif;font-size:10px;fill:#888888;letter-spacing:-0.7px;">-1</text><text x="297" y="532.8" text-anchor="end" style="font-family:Liberation Sans,sans-serif;font-size:10px;fill:#888888;letter-spacing:-0.7px;">-2</text><text x="297" y="550.8" text-anchor="end" style="font-family:Liberation Sans,sans-serif;font-size:10px;fill:#888888;letter-spacing:-0.7px;">-3</text><text x="297" y="568.8" text-anchor="end" style="font-family:Liberation Sans,sans-serif;font-size:10px;fill:#888888;letter-spacing:-0.7px;">-4</text><text x="297" y="587.8" text-anchor="end" style="font-family:Liberation Sans,sans-serif;font-size:10px;fill:#888888;letter-spacing:-0.7px;">-5</text><text x="301" y="595.5" text-anchor="middle" style="font-family:Liberation Sans,sans-serif;font-size:10px;fill:#888888;letter-spacing:-0.7px;letter-spacing:-0.2px;">0</text><text x="370" y="595.5" text-anchor="middle" style="font-family:Liberation Sans,sans-serif;font-size:10px;fill:#888888;letter-spacing:-0.7px;letter-spacing:-0.2px;">0.05</text><text x="437" y="595.5" text-anchor="middle" style="font-family:Liberation Sans,sans-serif;font-size:10px;fill:#888888;letter-spacing:-0.7px;letter-spacing:-0.2px;">0.1</text><text x="505" y="595.5" text-anchor="middle" style="font-family:Liberation Sans,sans-serif;font-size:10px;fill:#888888;letter-spacing:-0.7px;letter-spacing:-0.2px;">0.15</text><text x="572" y="595.5" text-anchor="middle" style="font-family:Liberation Sans,sans-serif;font-size:10px;fill:#888888;letter-spacing:-0.7px;letter-spacing:-0.2px;">0.2</text><text x="640" y="595.5" text-anchor="middle" style="font-family:Liberation Sans,sans-serif;font-size:10px;fill:#888888;letter-spacing:-0.7px;letter-spacing:-0.2px;">0.25</text><text x="707" y="595.5" text-anchor="middle" style="font-family:Liberation Sans,sans-serif;font-size:10px;fill:#888888;letter-spacing:-0.7px;letter-spacing:-0.2px;">0.3</text><text x="775" y="595.5" text-anchor="middle" style="font-family:Liberation Sans,sans-serif;font-size:10px;fill:#888888;letter-spacing:-0.7px;letter-spacing:-0.2px;">0.35</text><text x="854" y="595.5" text-anchor="middle" style="font-family:Liberation Sans,sans-serif;font-size:10px;fill:#888888;letter-spacing:-0.7px;letter-spacing:-0.2px;">0.41</text><text x="0" y="0" transform="translate(284.5,494) rotate(-90)" text-anchor="middle" style="font-family:Liberation Sans,sans-serif;font-size:10px;fill:#888888;letter-spacing:-0.7px;">Pa</text><text x="577" y="611" text-anchor="middle" style="font-family:Liberation Sans,sans-serif;font-size:10px;fill:#888888;letter-spacing:-0.7px;">Time</text><rect x="937.5" y="400.5" width="555" height="182" fill="#fff"/><line x1="1006.5" y1="400" x2="1006.5" y2="582" stroke="#d6d6d6" stroke-width="1"/><line x1="1073.5" y1="400" x2="1073.5" y2="582" stroke="#d6d6d6" stroke-width="1"/><line x1="1141.5" y1="400" x2="1141.5" y2="582" stroke="#d6d6d6" stroke-width="1"/><line x1="1208.5" y1="400" x2="1208.5" y2="582" stroke="#d6d6d6" stroke-width="1"/><line x1="1276.5" y1="400" x2="1276.5" y2="582" stroke="#d6d6d6" stroke-width="1"/><line x1="1343.5" y1="400" x2="1343.5" y2="582" stroke="#d6d6d6" stroke-width="1"/><line x1="1411.5" y1="400" x2="1411.5" y2="582" stroke="#d6d6d6" stroke-width="1"/><line x1="1478.5" y1="400" x2="1478.5" y2="582" stroke="#d6d6d6" stroke-width="1"/><line x1="937" y1="419.5" x2="1492" y2="419.5" stroke="#d6d6d6" stroke-width="1"/><line x1="937" y1="437.5" x2="1492" y2="437.5" stroke="#d6d6d6" stroke-width="1"/><line x1="937" y1="455.5" x2="1492" y2="455.5" stroke="#d6d6d6" stroke-width="1"/><line x1="937" y1="473.5" x2="1492" y2="473.5" stroke="#d6d6d6" stroke-width="1"/><line x1="937" y1="491.5" x2="1492" y2="491.5" stroke="#d6d6d6" stroke-width="1"/><line x1="937" y1="509.5" x2="1492" y2="509.5" stroke="#d6d6d6" stroke-width="1"/><line x1="937" y1="527.5" x2="1492" y2="527.5" stroke="#d6d6d6" stroke-width="1"/><line x1="937" y1="545.5" x2="1492" y2="545.5" stroke="#d6d6d6" stroke-width="1"/><line x1="937" y1="563.5" x2="1492" y2="563.5" stroke="#d6d6d6" stroke-width="1"/><polyline fill="none" stroke="#0c3f72" stroke-width="1.8" stroke-linejoin="round" points="938.0,492.0 939.3,492.2 940.6,491.0 941.9,490.7 943.2,491.5 944.5,491.3 945.8,491.5 947.1,492.0 948.4,490.9 949.7,491.9 951.0,491.3 952.3,490.9 953.6,491.6 954.9,490.9 956.2,491.0 957.5,490.8 958.8,490.8 960.1,491.5 961.4,490.6 962.7,491.4 964.0,490.6 965.3,491.6 966.6,490.8 967.9,492.0 969.2,491.3 970.5,491.0 971.8,492.1 973.1,490.6 974.4,490.7 975.7,491.9 977.0,491.7 978.3,491.8 979.6,490.5 980.9,491.1 982.2,491.8 983.5,491.2 984.8,490.9 986.1,490.5 987.4,491.7 988.7,490.8 990.0,491.7 991.3,490.2 992.6,491.8 993.9,490.2 995.2,490.9 996.5,491.4 997.8,490.7 999.1,490.9 1000.4,492.0 1001.7,490.8 1003.0,491.2 1004.3,491.1 1005.6,490.8 1006.9,492.0 1008.2,491.3 1009.5,490.4 1010.8,490.7 1012.1,491.5 1013.4,491.1 1014.7,491.5 1016.0,491.7 1017.3,491.3 1018.6,491.5 1019.9,490.8 1021.2,491.8 1022.5,490.7 1023.8,490.6 1025.1,491.1 1026.4,491.0 1027.7,490.3 1029.0,490.4 1030.3,491.7 1031.6,490.5 1032.9,491.0 1034.2,490.7 1035.5,492.4 1036.8,492.1 1038.1,492.3 1039.4,492.3 1040.7,490.9 1042.0,492.4 1043.3,491.2 1044.6,490.9 1045.9,491.2 1047.2,491.1 1048.5,492.5 1049.8,491.2 1051.1,491.3 1052.4,490.9 1053.7,492.2 1055.0,492.2 1056.3,491.9 1057.6,491.3 1058.9,491.1 1060.2,491.5 1061.5,492.1 1062.8,492.2 1064.1,491.2 1065.4,491.0 1066.7,491.7 1068.0,492.0 1069.3,490.9 1070.6,490.7 1071.9,491.2 1073.2,492.5 1074.5,492.0 1075.8,490.7 1077.1,490.9 1078.4,491.4 1079.7,492.2 1081.0,490.9 1082.3,490.6 1083.6,491.1 1084.9,491.0 1086.2,491.3 1087.5,490.7 1088.8,491.2 1090.1,492.0 1091.4,490.5 1092.7,491.3 1094.0,491.6 1095.3,490.7 1096.6,491.3 1097.9,490.8 1099.2,491.0 1100.5,491.6 1101.8,491.9 1103.1,491.1 1104.4,490.5 1105.7,491.4 1107.0,490.9 1108.3,490.3 1109.6,491.1 1110.9,491.2 1112.2,490.4 1113.5,490.6 1114.8,491.6 1116.1,491.3 1117.4,491.5 1118.7,490.9 1120.0,490.9 1121.3,490.2 1122.6,490.1 1123.9,491.3 1125.2,491.6 1126.5,490.6 1127.8,490.9 1129.1,491.1 1130.4,491.3 1131.7,490.7 1133.0,490.4 1134.3,490.7 1135.6,492.1 1136.9,491.0 1138.2,491.1 1139.5,492.1 1140.8,491.8 1142.1,492.3 1143.4,492.0 1144.7,492.1 1146.0,491.9 1147.3,491.1 1148.6,491.6 1149.9,492.0 1151.2,490.4 1152.5,491.9 1153.8,490.5 1155.1,490.2 1156.4,491.3 1157.7,491.5 1159.0,491.2 1160.3,491.6 1161.6,491.8 1162.9,491.7 1164.2,491.9 1165.5,490.5 1166.8,490.1 1168.1,491.6 1169.4,491.7 1170.7,490.7 1172.0,490.3 1173.3,490.6 1174.6,490.9 1175.9,490.5 1177.2,491.3 1178.5,490.6 1179.8,491.0 1181.1,491.3 1182.4,490.9 1183.7,491.5 1185.0,491.4 1186.3,490.5 1187.6,490.4 1188.9,490.6 1190.2,490.6 1191.5,492.0 1192.8,491.0 1194.1,491.6 1195.4,491.0 1196.7,491.6 1198.0,491.7 1199.3,490.4 1200.6,490.9 1201.9,491.1 1203.2,491.3 1204.5,491.4 1205.8,490.6 1207.1,490.7 1208.4,490.3 1209.7,490.2 1211.0,490.6 1212.3,491.1 1213.6,491.8 1214.9,491.0 1216.2,491.5 1217.5,491.4 1218.8,490.8 1220.1,491.7 1221.4,491.5 1222.7,490.9 1224.0,491.3 1225.3,491.0 1226.6,490.7 1227.9,490.7 1229.2,491.7 1230.5,490.4 1231.8,490.7 1233.1,490.4 1234.4,490.4 1235.7,491.5 1237.0,491.9 1238.3,490.7 1239.6,491.6 1240.9,491.0 1242.2,491.3 1243.5,490.5 1244.8,490.1 1246.1,491.5 1247.4,491.0 1248.7,491.0 1250.0,491.2 1251.3,491.4 1252.6,491.0 1253.9,491.6 1255.2,490.6 1256.5,491.9 1257.8,491.6 1259.1,491.7 1260.4,491.3 1261.7,491.6 1263.0,491.1 1264.3,491.7 1265.6,490.9 1266.9,491.2 1268.2,491.2 1269.5,492.2 1270.8,491.6 1272.1,491.2 1273.4,492.2 1274.7,491.4 1276.0,491.7 1277.3,491.3 1278.6,491.4 1279.9,491.6 1281.2,491.5 1282.5,491.4 1283.8,492.1 1285.1,491.6 1286.4,491.7 1287.7,492.0 1289.0,490.3 1290.3,490.9 1291.6,490.8 1292.9,491.3 1294.2,490.5 1295.5,491.3 1296.8,491.0 1298.1,491.5 1299.4,490.4 1300.7,491.4 1302.0,491.2 1303.3,491.1 1304.6,491.7 1305.9,491.1 1307.2,491.5 1308.5,490.6 1309.8,490.3 1311.1,490.8 1312.4,490.8 1313.7,490.7 1315.0,490.6 1316.3,491.4 1317.6,490.5 1318.9,490.9 1320.2,491.2 1321.5,490.8 1322.8,491.8 1324.1,491.6 1325.4,491.6 1326.7,491.7 1328.0,490.2 1329.3,491.8 1330.6,490.6 1331.9,490.3 1333.2,491.4 1334.5,490.3 1335.8,491.5 1337.1,491.6 1338.4,491.5 1339.7,491.7 1341.0,491.7 1342.3,491.4 1343.6,491.5 1344.9,491.7 1346.2,490.7 1347.5,490.4 1348.8,490.2 1350.1,490.4 1351.4,491.0 1352.7,491.7 1354.0,491.6 1355.3,491.1 1356.6,491.6 1357.9,490.8 1359.2,490.4 1360.5,491.4 1361.8,491.3 1363.1,491.9 1364.4,491.9 1365.7,491.1 1367.0,490.4 1368.3,491.5 1369.6,491.9 1370.9,491.1 1372.2,491.7 1373.5,491.0 1374.8,491.2 1376.1,490.8 1377.4,491.1 1378.7,490.9 1380.0,492.2 1381.3,491.9 1382.6,491.0 1383.9,491.4 1385.2,491.8 1386.5,491.6 1387.8,491.4 1389.1,490.8 1390.4,490.5 1391.7,491.4 1393.0,491.7 1394.3,491.5 1395.6,491.6 1396.9,491.6 1398.2,490.9 1399.5,491.4 1400.8,490.8 1402.1,490.6 1403.4,492.3 1404.7,491.3 1406.0,492.2 1407.3,491.2 1408.6,491.5 1409.9,491.4 1411.2,492.4 1412.5,491.6 1413.8,490.7 1415.1,491.6 1416.4,491.4 1417.7,491.2 1419.0,492.2 1420.3,491.5 1421.6,490.8 1422.9,491.0 1424.2,490.6 1425.5,491.7 1426.8,492.1 1428.1,491.8 1429.4,490.2 1430.7,490.7 1432.0,490.6 1433.3,491.6 1434.6,491.8 1435.9,490.5 1437.2,491.6 1438.5,492.0 1439.8,492.0 1441.1,490.4 1442.4,491.4 1443.7,490.5 1445.0,491.6 1446.3,491.8 1447.6,490.3 1448.9,491.2 1450.2,491.4 1451.5,491.5 1452.8,491.3 1454.1,490.9 1455.4,491.5 1456.7,491.6 1458.0,490.8 1459.3,491.9 1460.6,491.7 1461.9,491.3 1463.2,491.8 1464.5,490.9 1465.8,491.9 1467.1,491.5 1468.4,492.0 1469.7,490.9 1471.0,490.8 1472.3,491.3 1473.6,492.0 1474.9,491.8 1476.2,491.9 1477.5,490.9 1478.8,491.9 1480.1,492.1 1481.4,490.6 1482.7,491.9 1484.0,491.8 1485.3,490.9 1486.6,491.8 1487.9,490.9 1489.2,491.8 1490.5,491.4"/><rect x="937.5" y="400" width="3.5" height="182" fill="#a6d40a"/><rect x="937.5" y="400.5" width="555" height="182" fill="none" stroke="#a0a0a0" stroke-width="1"/><text x="933" y="404.8" text-anchor="end" style="font-family:Liberation Sans,sans-serif;font-size:10px;fill:#888888;letter-spacing:-0.7px;">5</text><text x="933" y="423.8" text-anchor="end" style="font-family:Liberation Sans,sans-serif;font-size:10px;fill:#888888;letter-spacing:-0.7px;">4</text><text x="933" y="441.8" text-anchor="end" style="font-family:Liberation Sans,sans-serif;font-size:10px;fill:#888888;letter-spacing:-0.7px;">3</text><text x="933" y="459.8" text-anchor="end" style="font-family:Liberation Sans,sans-serif;font-size:10px;fill:#888888;letter-spacing:-0.7px;">2</text><text x="933" y="477.8" text-anchor="end" style="font-family:Liberation Sans,sans-serif;font-size:10px;fill:#888888;letter-spacing:-0.7px;">1</text><text x="933" y="495.8" text-anchor="end" style="font-family:Liberation Sans,sans-serif;font-size:10px;fill:#888888;letter-spacing:-0.7px;">0</text><text x="933" y="513.8" text-anchor="end" style="font-family:Liberation Sans,sans-serif;font-size:10px;fill:#888888;letter-spacing:-0.7px;">-1</text><text x="933" y="531.8" text-anchor="end" style="font-family:Liberation Sans,sans-serif;font-size:10px;fill:#888888;letter-spacing:-0.7px;">-2</text><text x="933" y="549.8" text-anchor="end" style="font-family:Liberation Sans,sans-serif;font-size:10px;fill:#888888;letter-spacing:-0.7px;">-3</text><text x="933" y="567.8" text-anchor="end" style="font-family:Liberation Sans,sans-serif;font-size:10px;fill:#888888;letter-spacing:-0.7px;">-4</text><text x="933" y="586.8" text-anchor="end" style="font-family:Liberation Sans,sans-serif;font-size:10px;fill:#888888;letter-spacing:-0.7px;">-5</text><text x="937" y="594.5" text-anchor="middle" style="font-family:Liberation Sans,sans-serif;font-size:10px;fill:#888888;letter-spacing:-0.7px;letter-spacing:-0.2px;">0</text><text x="1006" y="594.5" text-anchor="middle" style="font-family:Liberation Sans,sans-serif;font-size:10px;fill:#888888;letter-spacing:-0.7px;letter-spacing:-0.2px;">0.05</text><text x="1073" y="594.5" text-anchor="middle" style="font-family:Liberation Sans,sans-serif;font-size:10px;fill:#888888;letter-spacing:-0.7px;letter-spacing:-0.2px;">0.1</text><text x="1141" y="594.5" text-anchor="middle" style="font-family:Liberation Sans,sans-serif;font-size:10px;fill:#888888;letter-spacing:-0.7px;letter-spacing:-0.2px;">0.15</text><text x="1208" y="594.5" text-anchor="middle" style="font-family:Liberation Sans,sans-serif;font-size:10px;fill:#888888;letter-spacing:-0.7px;letter-spacing:-0.2px;">0.2</text><text x="1276" y="594.5" text-anchor="middle" style="font-family:Liberation Sans,sans-serif;font-size:10px;fill:#888888;letter-spacing:-0.7px;letter-spacing:-0.2px;">0.25</text><text x="1343" y="594.5" text-anchor="middle" style="font-family:Liberation Sans,sans-serif;font-size:10px;fill:#888888;letter-spacing:-0.7px;letter-spacing:-0.2px;">0.3</text><text x="1411" y="594.5" text-anchor="middle" style="font-family:Liberation Sans,sans-serif;font-size:10px;fill:#888888;letter-spacing:-0.7px;letter-spacing:-0.2px;">0.35</text><text x="1490" y="594.5" text-anchor="middle" style="font-family:Liberation Sans,sans-serif;font-size:10px;fill:#888888;letter-spacing:-0.7px;letter-spacing:-0.2px;">0.41</text><text x="0" y="0" transform="translate(920,494.5) rotate(-90)" text-anchor="middle" style="font-family:Liberation Sans,sans-serif;font-size:10px;fill:#888888;letter-spacing:-0.7px;">Pa</text><text x="1213" y="610" text-anchor="middle" style="font-family:Liberation Sans,sans-serif;font-size:10px;fill:#888888;letter-spacing:-0.7px;">Time</text></svg>
<div style="position:absolute;left:443px;top:114px;width:106px;height:21px;border:1px solid #a0a0a0;background:#f0f0f0;"></div>
<div style="position:absolute;left:445.6px;top:116px;white-space:nowrap;font-size:12.5px;width:60px;height:23px;line-height:23px;text-align:center;">9.77</div>
<div style="position:absolute;left:494px;top:116px;white-space:nowrap;font-size:12.5px;width:60px;height:23px;line-height:23px;text-align:center;">60.01</div>
<div style="position:absolute;left:552px;top:114px;width:85px;height:21px;border:1px solid #a0a0a0;background:#fff;"></div>
<div style="position:absolute;left:556px;top:115px;white-space:nowrap;font-size:10px;height:23px;line-height:23px;">FFT</div>
<div style="position:absolute;left:773px;top:113px;width:82px;height:22px;border:1px solid #a0a0a0;background:#fff;"></div>
<div style="position:absolute;left:778px;top:114px;white-space:nowrap;font-size:10px;height:23px;line-height:23px;">Dev6/ai0</div>
<svg style="position:absolute;left:824px;top:117px" width="29" height="16" viewBox="0 0 29 16"><rect x="0.5" y="0.5" width="28" height="15" fill="#fff" stroke="#909090"/><path d="M2 11 L10.5 3 L18.5 10.8 L26.6 3" fill="none" stroke="#3a5876" stroke-width="1.1"/></svg>
<div style="position:absolute;left:1080px;top:114px;width:106px;height:21px;border:1px solid #a0a0a0;background:#f0f0f0;"></div>
<div style="position:absolute;left:1076px;top:116px;white-space:nowrap;font-size:12.5px;width:60px;height:23px;line-height:23px;text-align:center;">16</div>
<div style="position:absolute;left:1131px;top:116px;white-space:nowrap;font-size:12.5px;width:60px;height:23px;line-height:23px;text-align:center;">41.86</div>
<div style="position:absolute;left:1189px;top:114px;width:85px;height:21px;border:1px solid #a0a0a0;background:#fff;"></div>
<div style="position:absolute;left:1193px;top:115px;white-space:nowrap;font-size:10px;height:23px;line-height:23px;">OCT</div>
<div style="position:absolute;left:1409px;top:113px;width:82px;height:22px;border:1px solid #a0a0a0;background:#fff;"></div>
<div style="position:absolute;left:1414px;top:114px;white-space:nowrap;font-size:10px;height:23px;line-height:23px;">Dev6/ai1</div>
<svg style="position:absolute;left:1460px;top:117px" width="29" height="16" viewBox="0 0 29 16"><rect x="0.5" y="0.5" width="28" height="15" fill="#fff" stroke="#909090"/><rect x="2" y="10" width="3" height="2.5" fill="#0453a3"/><rect x="7" y="3" width="6.5" height="9.5" fill="#0453a3"/><rect x="15" y="10.5" width="6.5" height="2" fill="#0453a3"/><rect x="23" y="3" width="4" height="9.5" fill="#0453a3"/></svg>
<div style="position:absolute;left:443px;top:375px;width:106px;height:21px;border:1px solid #a0a0a0;background:#f0f0f0;"></div>
<div style="position:absolute;left:437.5px;top:377px;white-space:nowrap;font-size:12.5px;width:60px;height:23px;line-height:23px;text-align:center;">0</div>
<div style="position:absolute;left:486px;top:377px;white-space:nowrap;font-size:12.5px;width:60px;height:23px;line-height:23px;text-align:center;">-0</div>
<div style="position:absolute;left:552px;top:375px;width:85px;height:21px;border:1px solid #a0a0a0;background:#fff;"></div>
<div style="position:absolute;left:556px;top:376px;white-space:nowrap;font-size:10px;height:23px;line-height:23px;">Time</div>
<div style="position:absolute;left:773px;top:374px;width:82px;height:22px;border:1px solid #a0a0a0;background:#fff;"></div>
<div style="position:absolute;left:778px;top:375px;white-space:nowrap;font-size:10px;height:23px;line-height:23px;">Dev6/ai2</div>
<svg style="position:absolute;left:824px;top:378px" width="29" height="16" viewBox="0 0 29 16"><rect x="0.5" y="0.5" width="28" height="15" fill="#fff" stroke="#909090"/><path d="M2 11 L10.5 3 L18.5 10.8 L26.6 3" fill="none" stroke="#3a5876" stroke-width="1.1"/></svg>
<div style="position:absolute;left:1080px;top:375px;width:106px;height:21px;border:1px solid #a0a0a0;background:#f0f0f0;"></div>
<div style="position:absolute;left:1073px;top:377px;white-space:nowrap;font-size:12.5px;width:60px;height:23px;line-height:23px;text-align:center;">0</div>
<div style="position:absolute;left:1121.5px;top:377px;white-space:nowrap;font-size:12.5px;width:60px;height:23px;line-height:23px;text-align:center;">-0</div>
<div style="position:absolute;left:1189px;top:375px;width:85px;height:21px;border:1px solid #a0a0a0;background:#fff;"></div>
<div style="position:absolute;left:1193px;top:376px;white-space:nowrap;font-size:10px;height:23px;line-height:23px;">Time</div>
<div style="position:absolute;left:1409px;top:374px;width:82px;height:22px;border:1px solid #a0a0a0;background:#fff;"></div>
<div style="position:absolute;left:1414px;top:375px;white-space:nowrap;font-size:10px;height:23px;line-height:23px;">Dev6/ai3</div>
<svg style="position:absolute;left:1460px;top:378px" width="29" height="16" viewBox="0 0 29 16"><rect x="0.5" y="0.5" width="28" height="15" fill="#fff" stroke="#909090"/><path d="M2 11 L10.5 3 L18.5 10.8 L26.6 3" fill="none" stroke="#3a5876" stroke-width="1.1"/></svg>
<div style="position:absolute;left:231px;top:628px;width:244px;height:191px;border:1px solid #a0a0a0;background:#fff;"></div>
<div style="position:absolute;left:232px;top:629px;width:244px;height:73px;background:#f5f5f5;"></div>
<div style="position:absolute;left:232px;top:702px;width:244px;height:1px;background:#a0a0a0;"></div>
<div style="position:absolute;left:245px;top:716px;width:22px;height:14px;border:1px solid #c4c4c4;background:#d6d6d6;color:#9a9a9a;font-size:11px;line-height:14px;text-align:center;letter-spacing:1px;">&lt;&lt;</div>
<div style="position:absolute;left:281px;top:716px;width:22px;height:14px;border:1px solid #c4c4c4;background:#d6d6d6;color:#9a9a9a;font-size:11px;line-height:14px;text-align:center;letter-spacing:1px;">&lt;</div>
<div style="position:absolute;left:390px;top:716px;width:22px;height:14px;border:1px solid #c4c4c4;background:#d6d6d6;color:#9a9a9a;font-size:11px;line-height:14px;text-align:center;letter-spacing:1px;">&gt;</div>
<div style="position:absolute;left:426px;top:716px;width:22px;height:14px;border:1px solid #c4c4c4;background:#d6d6d6;color:#9a9a9a;font-size:11px;line-height:14px;text-align:center;letter-spacing:1px;">&gt;&gt;</div>
<div style="position:absolute;left:317px;top:714px;width:59px;height:21px;border:1px solid #9a9a9a;background:#e9ebef;font-size:12px;line-height:21px;text-align:center;">0</div>
<div style="position:absolute;left:246px;top:744px;white-space:nowrap;font-size:12px;height:20px;line-height:20px;">图表</div>
<div style="position:absolute;left:350px;top:741px;width:98px;height:18px;border:1px solid #acacac;background:#fff;"></div>
<div style="position:absolute;left:351px;top:741px;white-space:nowrap;font-size:12px;color:#000;width:80px;height:20px;line-height:20px;text-align:center;">2*2</div>
<div style="position:absolute;left:431px;top:743px;width:15px;height:14px;border:1px solid #b4b4b4;background:#dcdcdc;"><svg width="10" height="6" style="position:absolute;left:3px;top:4px" viewBox="0 0 10 6"><path d="M0.5 0.5 L4.5 4.5 L8.5 0.5" fill="none" stroke="#444" stroke-width="1.15"/></svg></div>
<div style="position:absolute;left:240px;top:769px;width:223px;height:1px;background:#cfe3f0;"></div>
<div style="position:absolute;left:246px;top:781px;white-space:nowrap;font-size:12px;height:20px;line-height:20px;">FFT X轴显示方式</div>
<div style="position:absolute;left:351px;top:782px;width:98px;height:21px;border:1px solid #acacac;background:#fff;"></div>
<div style="position:absolute;left:352px;top:782px;white-space:nowrap;font-size:12px;color:#000;width:80px;height:23px;line-height:23px;text-align:center;">Logarithmic</div>
<div style="position:absolute;left:432px;top:784px;width:15px;height:17px;border:1px solid #b4b4b4;background:#dcdcdc;"><svg width="10" height="6" style="position:absolute;left:3px;top:6px" viewBox="0 0 10 6"><path d="M0.5 0.5 L4.5 4.5 L8.5 0.5" fill="none" stroke="#444" stroke-width="1.15"/></svg></div>
<div style="position:absolute;left:485px;top:628px;width:1025px;height:87px;background:#d4d4d4;"></div>
<div style="position:absolute;left:488px;top:630px;width:1019px;height:60px;background:#d6d6d6;border-left:1px solid #a8a8a8;border-top:1px solid #b4b4b4;border-right:1px solid #b0b0b0;"></div>
<svg style="position:absolute;left:0;top:0" width="1543" height="864" viewBox="0 0 1543 864"><line x1="522.5" y1="631" x2="522.5" y2="690" stroke="#c4c4c4" stroke-width="1"/><line x1="556.5" y1="631" x2="556.5" y2="690" stroke="#c4c4c4" stroke-width="1"/><line x1="590.5" y1="631" x2="590.5" y2="690" stroke="#c4c4c4" stroke-width="1"/><line x1="623.5" y1="631" x2="623.5" y2="690" stroke="#c4c4c4" stroke-width="1"/><line x1="657.5" y1="631" x2="657.5" y2="690" stroke="#c4c4c4" stroke-width="1"/><line x1="691.5" y1="631" x2="691.5" y2="690" stroke="#c4c4c4" stroke-width="1"/><line x1="725.5" y1="631" x2="725.5" y2="690" stroke="#c4c4c4" stroke-width="1"/><line x1="759.5" y1="631" x2="759.5" y2="690" stroke="#c4c4c4" stroke-width="1"/><line x1="793.5" y1="631" x2="793.5" y2="690" stroke="#c4c4c4" stroke-width="1"/><line x1="827.5" y1="631" x2="827.5" y2="690" stroke="#c4c4c4" stroke-width="1"/><line x1="861.5" y1="631" x2="861.5" y2="690" stroke="#c4c4c4" stroke-width="1"/><line x1="894.5" y1="631" x2="894.5" y2="690" stroke="#c4c4c4" stroke-width="1"/><line x1="928.5" y1="631" x2="928.5" y2="690" stroke="#c4c4c4" stroke-width="1"/><line x1="962.5" y1="631" x2="962.5" y2="690" stroke="#c4c4c4" stroke-width="1"/><line x1="996.5" y1="631" x2="996.5" y2="690" stroke="#c4c4c4" stroke-width="1"/><line x1="1030.5" y1="631" x2="1030.5" y2="690" stroke="#c4c4c4" stroke-width="1"/><line x1="1064.5" y1="631" x2="1064.5" y2="690" stroke="#c4c4c4" stroke-width="1"/><line x1="1098.5" y1="631" x2="1098.5" y2="690" stroke="#c4c4c4" stroke-width="1"/><line x1="1132.5" y1="631" x2="1132.5" y2="690" stroke="#c4c4c4" stroke-width="1"/><line x1="1165.5" y1="631" x2="1165.5" y2="690" stroke="#c4c4c4" stroke-width="1"/><line x1="1199.5" y1="631" x2="1199.5" y2="690" stroke="#c4c4c4" stroke-width="1"/><line x1="1233.5" y1="631" x2="1233.5" y2="690" stroke="#c4c4c4" stroke-width="1"/><line x1="1267.5" y1="631" x2="1267.5" y2="690" stroke="#c4c4c4" stroke-width="1"/><line x1="1301.5" y1="631" x2="1301.5" y2="690" stroke="#c4c4c4" stroke-width="1"/><line x1="1335.5" y1="631" x2="1335.5" y2="690" stroke="#c4c4c4" stroke-width="1"/><line x1="1369.5" y1="631" x2="1369.5" y2="690" stroke="#c4c4c4" stroke-width="1"/><line x1="1402.5" y1="631" x2="1402.5" y2="690" stroke="#c4c4c4" stroke-width="1"/><line x1="1436.5" y1="631" x2="1436.5" y2="690" stroke="#c4c4c4" stroke-width="1"/><line x1="1470.5" y1="631" x2="1470.5" y2="690" stroke="#c4c4c4" stroke-width="1"/><line x1="488" y1="660.5" x2="1507" y2="660.5" stroke="#c2c2c2" stroke-width="1"/><line x1="489" y1="660.5" x2="872" y2="660.5" stroke="#6d8398" stroke-width="1.4"/><line x1="488" y1="690.5" x2="1507" y2="690.5" stroke="#bcbcbc" stroke-width="1"/><line x1="488.5" y1="691" x2="488.5" y2="697" stroke="#4a4a4a" stroke-width="1"/><line x1="495.5" y1="692" x2="495.5" y2="695" stroke="#4a4a4a" stroke-width="1"/><line x1="502.5" y1="692" x2="502.5" y2="695" stroke="#4a4a4a" stroke-width="1"/><line x1="508.5" y1="692" x2="508.5" y2="695" stroke="#4a4a4a" stroke-width="1"/><line x1="515.5" y1="692" x2="515.5" y2="695" stroke="#4a4a4a" stroke-width="1"/><line x1="522.5" y1="691" x2="522.5" y2="697" stroke="#4a4a4a" stroke-width="1"/><line x1="529.5" y1="692" x2="529.5" y2="695" stroke="#4a4a4a" stroke-width="1"/><line x1="535.5" y1="692" x2="535.5" y2="695" stroke="#4a4a4a" stroke-width="1"/><line x1="542.5" y1="692" x2="542.5" y2="695" stroke="#4a4a4a" stroke-width="1"/><line x1="549.5" y1="692" x2="549.5" y2="695" stroke="#4a4a4a" stroke-width="1"/><line x1="556.5" y1="691" x2="556.5" y2="697" stroke="#4a4a4a" stroke-width="1"/><line x1="563.5" y1="692" x2="563.5" y2="695" stroke="#4a4a4a" stroke-width="1"/><line x1="569.5" y1="692" x2="569.5" y2="695" stroke="#4a4a4a" stroke-width="1"/><line x1="576.5" y1="692" x2="576.5" y2="695" stroke="#4a4a4a" stroke-width="1"/><line x1="583.5" y1="692" x2="583.5" y2="695" stroke="#4a4a4a" stroke-width="1"/><line x1="590.5" y1="691" x2="590.5" y2="697" stroke="#4a4a4a" stroke-width="1"/><line x1="596.5" y1="692" x2="596.5" y2="695" stroke="#4a4a4a" stroke-width="1"/><line x1="603.5" y1="692" x2="603.5" y2="695" stroke="#4a4a4a" stroke-width="1"/><line x1="610.5" y1="692" x2="610.5" y2="695" stroke="#4a4a4a" stroke-width="1"/><line x1="617.5" y1="692" x2="617.5" y2="695" stroke="#4a4a4a" stroke-width="1"/><line x1="623.5" y1="691" x2="623.5" y2="697" stroke="#4a4a4a" stroke-width="1"/><line x1="630.5" y1="692" x2="630.5" y2="695" stroke="#4a4a4a" stroke-width="1"/><line x1="637.5" y1="692" x2="637.5" y2="695" stroke="#4a4a4a" stroke-width="1"/><line x1="644.5" y1="692" x2="644.5" y2="695" stroke="#4a4a4a" stroke-width="1"/><line x1="651.5" y1="692" x2="651.5" y2="695" stroke="#4a4a4a" stroke-width="1"/><line x1="657.5" y1="691" x2="657.5" y2="697" stroke="#4a4a4a" stroke-width="1"/><line x1="664.5" y1="692" x2="664.5" y2="695" stroke="#4a4a4a" stroke-width="1"/><line x1="671.5" y1="692" x2="671.5" y2="695" stroke="#4a4a4a" stroke-width="1"/><line x1="678.5" y1="692" x2="678.5" y2="695" stroke="#4a4a4a" stroke-width="1"/><line x1="684.5" y1="692" x2="684.5" y2="695" stroke="#4a4a4a" stroke-width="1"/><line x1="691.5" y1="691" x2="691.5" y2="697" stroke="#4a4a4a" stroke-width="1"/><line x1="698.5" y1="692" x2="698.5" y2="695" stroke="#4a4a4a" stroke-width="1"/><line x1="705.5" y1="692" x2="705.5" y2="695" stroke="#4a4a4a" stroke-width="1"/><line x1="712.5" y1="692" x2="712.5" y2="695" stroke="#4a4a4a" stroke-width="1"/><line x1="718.5" y1="692" x2="718.5" y2="695" stroke="#4a4a4a" stroke-width="1"/><line x1="725.5" y1="691" x2="725.5" y2="697" stroke="#4a4a4a" stroke-width="1"/><line x1="732.5" y1="692" x2="732.5" y2="695" stroke="#4a4a4a" stroke-width="1"/><line x1="739.5" y1="692" x2="739.5" y2="695" stroke="#4a4a4a" stroke-width="1"/><line x1="745.5" y1="692" x2="745.5" y2="695" stroke="#4a4a4a" stroke-width="1"/><line x1="752.5" y1="692" x2="752.5" y2="695" stroke="#4a4a4a" stroke-width="1"/><line x1="759.5" y1="691" x2="759.5" y2="697" stroke="#4a4a4a" stroke-width="1"/><line x1="766.5" y1="692" x2="766.5" y2="695" stroke="#4a4a4a" stroke-width="1"/><line x1="773.5" y1="692" x2="773.5" y2="695" stroke="#4a4a4a" stroke-width="1"/><line x1="779.5" y1="692" x2="779.5" y2="695" stroke="#4a4a4a" stroke-width="1"/><line x1="786.5" y1="692" x2="786.5" y2="695" stroke="#4a4a4a" stroke-width="1"/><line x1="793.5" y1="691" x2="793.5" y2="697" stroke="#4a4a4a" stroke-width="1"/><line x1="800.5" y1="692" x2="800.5" y2="695" stroke="#4a4a4a" stroke-width="1"/><line x1="806.5" y1="692" x2="806.5" y2="695" stroke="#4a4a4a" stroke-width="1"/><line x1="813.5" y1="692" x2="813.5" y2="695" stroke="#4a4a4a" stroke-width="1"/><line x1="820.5" y1="692" x2="820.5" y2="695" stroke="#4a4a4a" stroke-width="1"/><line x1="827.5" y1="691" x2="827.5" y2="697" stroke="#4a4a4a" stroke-width="1"/><line x1="833.5" y1="692" x2="833.5" y2="695" stroke="#4a4a4a" stroke-width="1"/><line x1="840.5" y1="692" x2="840.5" y2="695" stroke="#4a4a4a" stroke-width="1"/><line x1="847.5" y1="692" x2="847.5" y2="695" stroke="#4a4a4a" stroke-width="1"/><line x1="854.5" y1="692" x2="854.5" y2="695" stroke="#4a4a4a" stroke-width="1"/><line x1="861.5" y1="691" x2="861.5" y2="697" stroke="#4a4a4a" stroke-width="1"/><line x1="867.5" y1="692" x2="867.5" y2="695" stroke="#4a4a4a" stroke-width="1"/><line x1="874.5" y1="692" x2="874.5" y2="695" stroke="#4a4a4a" stroke-width="1"/><line x1="881.5" y1="692" x2="881.5" y2="695" stroke="#4a4a4a" stroke-width="1"/><line x1="888.5" y1="692" x2="888.5" y2="695" stroke="#4a4a4a" stroke-width="1"/><line x1="894.5" y1="691" x2="894.5" y2="697" stroke="#4a4a4a" stroke-width="1"/><line x1="901.5" y1="692" x2="901.5" y2="695" stroke="#4a4a4a" stroke-width="1"/><line x1="908.5" y1="692" x2="908.5" y2="695" stroke="#4a4a4a" stroke-width="1"/><line x1="915.5" y1="692" x2="915.5" y2="695" stroke="#4a4a4a" stroke-width="1"/><line x1="922.5" y1="692" x2="922.5" y2="695" stroke="#4a4a4a" stroke-width="1"/><line x1="928.5" y1="691" x2="928.5" y2="697" stroke="#4a4a4a" stroke-width="1"/><line x1="935.5" y1="692" x2="935.5" y2="695" stroke="#4a4a4a" stroke-width="1"/><line x1="942.5" y1="692" x2="942.5" y2="695" stroke="#4a4a4a" stroke-width="1"/><line x1="949.5" y1="692" x2="949.5" y2="695" stroke="#4a4a4a" stroke-width="1"/><line x1="955.5" y1="692" x2="955.5" y2="695" stroke="#4a4a4a" stroke-width="1"/><line x1="962.5" y1="691" x2="962.5" y2="697" stroke="#4a4a4a" stroke-width="1"/><line x1="969.5" y1="692" x2="969.5" y2="695" stroke="#4a4a4a" stroke-width="1"/><line x1="976.5" y1="692" x2="976.5" y2="695" stroke="#4a4a4a" stroke-width="1"/><line x1="983.5" y1="692" x2="983.5" y2="695" stroke="#4a4a4a" stroke-width="1"/><line x1="989.5" y1="692" x2="989.5" y2="695" stroke="#4a4a4a" stroke-width="1"/><line x1="996.5" y1="691" x2="996.5" y2="697" stroke="#4a4a4a" stroke-width="1"/><line x1="1003.5" y1="692" x2="1003.5" y2="695" stroke="#4a4a4a" stroke-width="1"/><line x1="1010.5" y1="692" x2="1010.5" y2="695" stroke="#4a4a4a" stroke-width="1"/><line x1="1016.5" y1="692" x2="1016.5" y2="695" stroke="#4a4a4a" stroke-width="1"/><line x1="1023.5" y1="692" x2="1023.5" y2="695" stroke="#4a4a4a" stroke-width="1"/><line x1="1030.5" y1="691" x2="1030.5" y2="697" stroke="#4a4a4a" stroke-width="1"/><line x1="1037.5" y1="692" x2="1037.5" y2="695" stroke="#4a4a4a" stroke-width="1"/><line x1="1043.5" y1="692" x2="1043.5" y2="695" stroke="#4a4a4a" stroke-width="1"/><line x1="1050.5" y1="692" x2="1050.5" y2="695" stroke="#4a4a4a" stroke-width="1"/><line x1="1057.5" y1="692" x2="1057.5" y2="695" stroke="#4a4a4a" stroke-width="1"/><line x1="1064.5" y1="691" x2="1064.5" y2="697" stroke="#4a4a4a" stroke-width="1"/><line x1="1071.5" y1="692" x2="1071.5" y2="695" stroke="#4a4a4a" stroke-width="1"/><line x1="1077.5" y1="692" x2="1077.5" y2="695" stroke="#4a4a4a" stroke-width="1"/><line x1="1084.5" y1="692" x2="1084.5" y2="695" stroke="#4a4a4a" stroke-width="1"/><line x1="1091.5" y1="692" x2="1091.5" y2="695" stroke="#4a4a4a" stroke-width="1"/><line x1="1098.5" y1="691" x2="1098.5" y2="697" stroke="#4a4a4a" stroke-width="1"/><line x1="1104.5" y1="692" x2="1104.5" y2="695" stroke="#4a4a4a" stroke-width="1"/><line x1="1111.5" y1="692" x2="1111.5" y2="695" stroke="#4a4a4a" stroke-width="1"/><line x1="1118.5" y1="692" x2="1118.5" y2="695" stroke="#4a4a4a" stroke-width="1"/><line x1="1125.5" y1="692" x2="1125.5" y2="695" stroke="#4a4a4a" stroke-width="1"/><line x1="1132.5" y1="691" x2="1132.5" y2="697" stroke="#4a4a4a" stroke-width="1"/><line x1="1138.5" y1="692" x2="1138.5" y2="695" stroke="#4a4a4a" stroke-width="1"/><line x1="1145.5" y1="692" x2="1145.5" y2="695" stroke="#4a4a4a" stroke-width="1"/><line x1="1152.5" y1="692" x2="1152.5" y2="695" stroke="#4a4a4a" stroke-width="1"/><line x1="1159.5" y1="692" x2="1159.5" y2="695" stroke="#4a4a4a" stroke-width="1"/><line x1="1165.5" y1="691" x2="1165.5" y2="697" stroke="#4a4a4a" stroke-width="1"/><line x1="1172.5" y1="692" x2="1172.5" y2="695" stroke="#4a4a4a" stroke-width="1"/><line x1="1179.5" y1="692" x2="1179.5" y2="695" stroke="#4a4a4a" stroke-width="1"/><line x1="1186.5" y1="692" x2="1186.5" y2="695" stroke="#4a4a4a" stroke-width="1"/><line x1="1192.5" y1="692" x2="1192.5" y2="695" stroke="#4a4a4a" stroke-width="1"/><line x1="1199.5" y1="691" x2="1199.5" y2="697" stroke="#4a4a4a" stroke-width="1"/><line x1="1206.5" y1="692" x2="1206.5" y2="695" stroke="#4a4a4a" stroke-width="1"/><line x1="1213.5" y1="692" x2="1213.5" y2="695" stroke="#4a4a4a" stroke-width="1"/><line x1="1220.5" y1="692" x2="1220.5" y2="695" stroke="#4a4a4a" stroke-width="1"/><line x1="1226.5" y1="692" x2="1226.5" y2="695" stroke="#4a4a4a" stroke-width="1"/><line x1="1233.5" y1="691" x2="1233.5" y2="697" stroke="#4a4a4a" stroke-width="1"/><line x1="1240.5" y1="692" x2="1240.5" y2="695" stroke="#4a4a4a" stroke-width="1"/><line x1="1247.5" y1="692" x2="1247.5" y2="695" stroke="#4a4a4a" stroke-width="1"/><line x1="1253.5" y1="692" x2="1253.5" y2="695" stroke="#4a4a4a" stroke-width="1"/><line x1="1260.5" y1="692" x2="1260.5" y2="695" stroke="#4a4a4a" stroke-width="1"/><line x1="1267.5" y1="691" x2="1267.5" y2="697" stroke="#4a4a4a" stroke-width="1"/><line x1="1274.5" y1="692" x2="1274.5" y2="695" stroke="#4a4a4a" stroke-width="1"/><line x1="1281.5" y1="692" x2="1281.5" y2="695" stroke="#4a4a4a" stroke-width="1"/><line x1="1287.5" y1="692" x2="1287.5" y2="695" stroke="#4a4a4a" stroke-width="1"/><line x1="1294.5" y1="692" x2="1294.5" y2="695" stroke="#4a4a4a" stroke-width="1"/><line x1="1301.5" y1="691" x2="1301.5" y2="697" stroke="#4a4a4a" stroke-width="1"/><line x1="1308.5" y1="692" x2="1308.5" y2="695" stroke="#4a4a4a" stroke-width="1"/><line x1="1314.5" y1="692" x2="1314.5" y2="695" stroke="#4a4a4a" stroke-width="1"/><line x1="1321.5" y1="692" x2="1321.5" y2="695" stroke="#4a4a4a" stroke-width="1"/><line x1="1328.5" y1="692" x2="1328.5" y2="695" stroke="#4a4a4a" stroke-width="1"/><line x1="1335.5" y1="691" x2="1335.5" y2="697" stroke="#4a4a4a" stroke-width="1"/><line x1="1342.5" y1="692" x2="1342.5" y2="695" stroke="#4a4a4a" stroke-width="1"/><line x1="1348.5" y1="692" x2="1348.5" y2="695" stroke="#4a4a4a" stroke-width="1"/><line x1="1355.5" y1="692" x2="1355.5" y2="695" stroke="#4a4a4a" stroke-width="1"/><line x1="1362.5" y1="692" x2="1362.5" y2="695" stroke="#4a4a4a" stroke-width="1"/><line x1="1369.5" y1="691" x2="1369.5" y2="697" stroke="#4a4a4a" stroke-width="1"/><line x1="1375.5" y1="692" x2="1375.5" y2="695" stroke="#4a4a4a" stroke-width="1"/><line x1="1382.5" y1="692" x2="1382.5" y2="695" stroke="#4a4a4a" stroke-width="1"/><line x1="1389.5" y1="692" x2="1389.5" y2="695" stroke="#4a4a4a" stroke-width="1"/><line x1="1396.5" y1="692" x2="1396.5" y2="695" stroke="#4a4a4a" stroke-width="1"/><line x1="1402.5" y1="691" x2="1402.5" y2="697" stroke="#4a4a4a" stroke-width="1"/><line x1="1409.5" y1="692" x2="1409.5" y2="695" stroke="#4a4a4a" stroke-width="1"/><line x1="1416.5" y1="692" x2="1416.5" y2="695" stroke="#4a4a4a" stroke-width="1"/><line x1="1423.5" y1="692" x2="1423.5" y2="695" stroke="#4a4a4a" stroke-width="1"/><line x1="1430.5" y1="692" x2="1430.5" y2="695" stroke="#4a4a4a" stroke-width="1"/><line x1="1436.5" y1="691" x2="1436.5" y2="697" stroke="#4a4a4a" stroke-width="1"/><line x1="1443.5" y1="692" x2="1443.5" y2="695" stroke="#4a4a4a" stroke-width="1"/><line x1="1450.5" y1="692" x2="1450.5" y2="695" stroke="#4a4a4a" stroke-width="1"/><line x1="1457.5" y1="692" x2="1457.5" y2="695" stroke="#4a4a4a" stroke-width="1"/><line x1="1463.5" y1="692" x2="1463.5" y2="695" stroke="#4a4a4a" stroke-width="1"/><line x1="1470.5" y1="691" x2="1470.5" y2="697" stroke="#4a4a4a" stroke-width="1"/><line x1="1477.5" y1="692" x2="1477.5" y2="695" stroke="#4a4a4a" stroke-width="1"/><line x1="1484.5" y1="692" x2="1484.5" y2="695" stroke="#4a4a4a" stroke-width="1"/><line x1="1491.5" y1="692" x2="1491.5" y2="695" stroke="#4a4a4a" stroke-width="1"/><line x1="1497.5" y1="692" x2="1497.5" y2="695" stroke="#4a4a4a" stroke-width="1"/><line x1="1504.5" y1="691" x2="1504.5" y2="697" stroke="#4a4a4a" stroke-width="1"/><text x="488.5" y="707" text-anchor="middle" style="font-family:Liberation Sans,sans-serif;font-size:10px;fill:#b2b2b2;letter-spacing:-0.5px;">0</text><text x="522.4" y="707" text-anchor="middle" style="font-family:Liberation Sans,sans-serif;font-size:10px;fill:#b2b2b2;letter-spacing:-0.5px;">1</text><text x="556.2" y="707" text-anchor="middle" style="font-family:Liberation Sans,sans-serif;font-size:10px;fill:#b2b2b2;letter-spacing:-0.5px;">2</text><text x="590.1" y="707" text-anchor="middle" style="font-family:Liberation Sans,sans-serif;font-size:10px;fill:#b2b2b2;letter-spacing:-0.5px;">3</text><text x="624.0" y="707" text-anchor="middle" style="font-family:Liberation Sans,sans-serif;font-size:10px;fill:#b2b2b2;letter-spacing:-0.5px;">4</text><text x="657.9" y="707" text-anchor="middle" style="font-family:Liberation Sans,sans-serif;font-size:10px;fill:#b2b2b2;letter-spacing:-0.5px;">5</text><text x="691.7" y="707" text-anchor="middle" style="font-family:Liberation Sans,sans-serif;font-size:10px;fill:#b2b2b2;letter-spacing:-0.5px;">6</text><text x="725.6" y="707" text-anchor="middle" style="font-family:Liberation Sans,sans-serif;font-size:10px;fill:#b2b2b2;letter-spacing:-0.5px;">7</text><text x="759.5" y="707" text-anchor="middle" style="font-family:Liberation Sans,sans-serif;font-size:10px;fill:#b2b2b2;letter-spacing:-0.5px;">8</text><text x="793.3" y="707" text-anchor="middle" style="font-family:Liberation Sans,sans-serif;font-size:10px;fill:#b2b2b2;letter-spacing:-0.5px;">9</text><text x="827.2" y="707" text-anchor="middle" style="font-family:Liberation Sans,sans-serif;font-size:10px;fill:#b2b2b2;letter-spacing:-0.5px;">10</text><text x="861.1" y="707" text-anchor="middle" style="font-family:Liberation Sans,sans-serif;font-size:10px;fill:#b2b2b2;letter-spacing:-0.5px;">11</text><text x="894.9" y="707" text-anchor="middle" style="font-family:Liberation Sans,sans-serif;font-size:10px;fill:#b2b2b2;letter-spacing:-0.5px;">12</text><text x="928.8" y="707" text-anchor="middle" style="font-family:Liberation Sans,sans-serif;font-size:10px;fill:#b2b2b2;letter-spacing:-0.5px;">13</text><text x="962.7" y="707" text-anchor="middle" style="font-family:Liberation Sans,sans-serif;font-size:10px;fill:#b2b2b2;letter-spacing:-0.5px;">14</text><text x="996.5" y="707" text-anchor="middle" style="font-family:Liberation Sans,sans-serif;font-size:10px;fill:#b2b2b2;letter-spacing:-0.5px;">15</text><text x="1030.4" y="707" text-anchor="middle" style="font-family:Liberation Sans,sans-serif;font-size:10px;fill:#b2b2b2;letter-spacing:-0.5px;">16</text><text x="1064.3" y="707" text-anchor="middle" style="font-family:Liberation Sans,sans-serif;font-size:10px;fill:#b2b2b2;letter-spacing:-0.5px;">17</text><text x="1098.2" y="707" text-anchor="middle" style="font-family:Liberation Sans,sans-serif;font-size:10px;fill:#b2b2b2;letter-spacing:-0.5px;">18</text><text x="1132.0" y="707" text-anchor="middle" style="font-family:Liberation Sans,sans-serif;font-size:10px;fill:#b2b2b2;letter-spacing:-0.5px;">19</text><text x="1165.9" y="707" text-anchor="middle" style="font-family:Liberation Sans,sans-serif;font-size:10px;fill:#b2b2b2;letter-spacing:-0.5px;">20</text><text x="1199.8" y="707" text-anchor="middle" style="font-family:Liberation Sans,sans-serif;font-size:10px;fill:#b2b2b2;letter-spacing:-0.5px;">21</text><text x="1233.6" y="707" text-anchor="middle" style="font-family:Liberation Sans,sans-serif;font-size:10px;fill:#b2b2b2;letter-spacing:-0.5px;">22</text><text x="1267.5" y="707" text-anchor="middle" style="font-family:Liberation Sans,sans-serif;font-size:10px;fill:#b2b2b2;letter-spacing:-0.5px;">23</text><text x="1301.4" y="707" text-anchor="middle" style="font-family:Liberation Sans,sans-serif;font-size:10px;fill:#b2b2b2;letter-spacing:-0.5px;">24</text><text x="1335.2" y="707" text-anchor="middle" style="font-family:Liberation Sans,sans-serif;font-size:10px;fill:#b2b2b2;letter-spacing:-0.5px;">25</text><text x="1369.1" y="707" text-anchor="middle" style="font-family:Liberation Sans,sans-serif;font-size:10px;fill:#b2b2b2;letter-spacing:-0.5px;">26</text><text x="1403.0" y="707" text-anchor="middle" style="font-family:Liberation Sans,sans-serif;font-size:10px;fill:#b2b2b2;letter-spacing:-0.5px;">27</text><text x="1436.9" y="707" text-anchor="middle" style="font-family:Liberation Sans,sans-serif;font-size:10px;fill:#b2b2b2;letter-spacing:-0.5px;">28</text><text x="1470.7" y="707" text-anchor="middle" style="font-family:Liberation Sans,sans-serif;font-size:10px;fill:#b2b2b2;letter-spacing:-0.5px;">29</text><text x="1504.6" y="707" text-anchor="middle" style="font-family:Liberation Sans,sans-serif;font-size:10px;fill:#b2b2b2;letter-spacing:-0.5px;">30</text></svg>
<div style="position:absolute;left:485px;top:740px;width:1023px;height:79px;background:#fff;border:1px solid #a0a0a0;"></div>
<div style="position:absolute;left:485px;top:722px;width:1024px;height:17px;background:linear-gradient(#b4e2fb,#9ad8fb 25%);border-bottom:1px solid #7ab4d8;"></div>
<div style="position:absolute;left:1509px;top:722px;width:1px;height:17px;background:#3a5a78;"></div>
<div style="position:absolute;left:487px;top:721px;white-space:nowrap;font-size:12px;height:18px;line-height:18px;">信号指示</div>
<div style="position:absolute;left:510px;top:746px;width:49px;height:9px;background:#a6d40a;"></div>
<div style="position:absolute;left:501.5px;top:759px;white-space:nowrap;font-size:11px;width:60px;height:18px;line-height:18px;text-align:center;">94</div>
<div style="position:absolute;left:570px;top:746px;width:49px;height:9px;background:#a6d40a;"></div>
<div style="position:absolute;left:563.5px;top:759px;white-space:nowrap;font-size:11px;width:60px;height:18px;line-height:18px;text-align:center;">66.7</div>
<div style="position:absolute;left:631px;top:746px;width:49px;height:9px;background:#a6d40a;"></div>
<div style="position:absolute;left:625px;top:759px;white-space:nowrap;font-size:11px;width:60px;height:18px;line-height:18px;text-align:center;">66.1</div>
<div style="position:absolute;left:693px;top:746px;width:49px;height:9px;background:#a6d40a;"></div>
<div style="position:absolute;left:687px;top:759px;white-space:nowrap;font-size:11px;width:60px;height:18px;line-height:18px;text-align:center;">66.1</div>
<div style="position:absolute;left:510px;top:793px;width:49px;height:21px;background:#a6d40a;border-bottom:1px solid #c09a40;"></div>
<div style="position:absolute;left:570px;top:803px;width:49px;height:11px;background:#a6d40a;border-bottom:1px solid #c09a40;"></div>
<div style="position:absolute;left:631px;top:803px;width:49px;height:11px;background:#a6d40a;border-bottom:1px solid #c09a40;"></div>
<div style="position:absolute;left:693px;top:803px;width:49px;height:11px;background:#a6d40a;border-bottom:1px solid #c09a40;"></div>
</body></html>
